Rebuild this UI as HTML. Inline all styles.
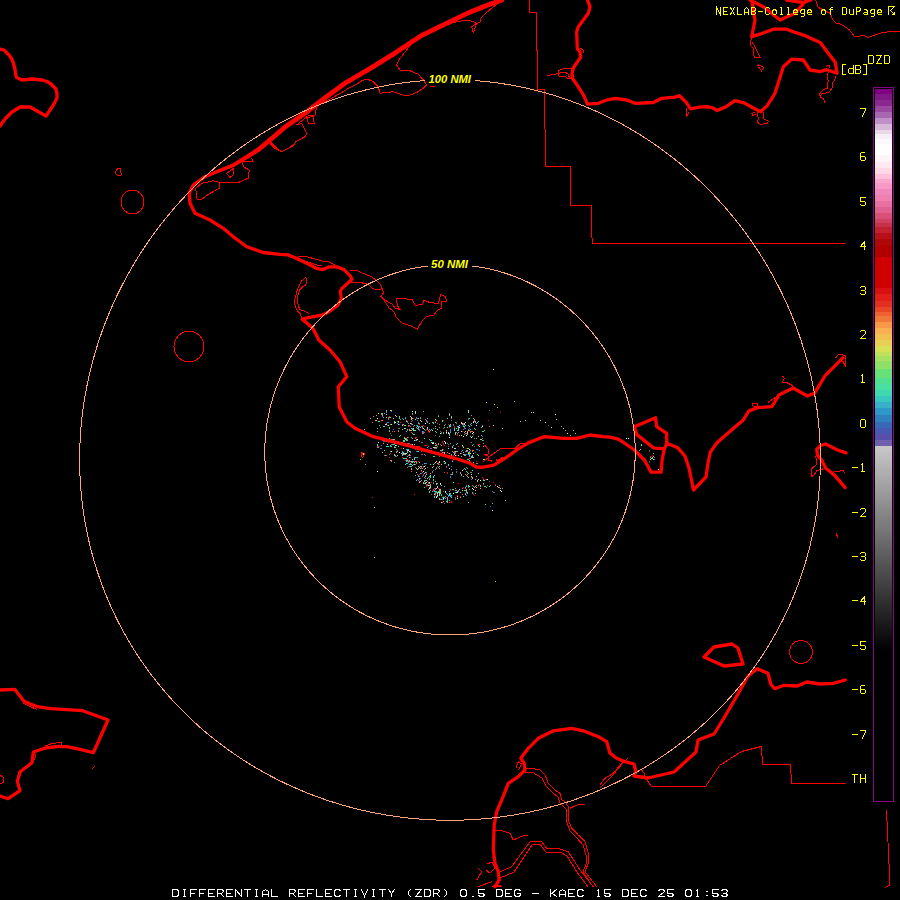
<!DOCTYPE html>
<html><head><meta charset="utf-8"><style>
html,body{margin:0;padding:0;background:#000;width:900px;height:900px;overflow:hidden}
svg{display:block}
</style></head><body>
<svg width="900" height="900" viewBox="0 0 900 900">
<rect width="900" height="900" fill="#000"/>
<g shape-rendering="crispEdges"><rect x="378" y="413" width="1" height="1" fill="#c0e040"/><rect x="382" y="413" width="1" height="1" fill="#40e080"/><rect x="381" y="413" width="1" height="1" fill="#40e080"/><rect x="384" y="413" width="1" height="1" fill="#30c0d0"/><rect x="381" y="414" width="1" height="1" fill="#ff6020"/><rect x="386" y="414" width="1" height="1" fill="#d0d0d0"/><rect x="376" y="415" width="1" height="1" fill="#a0a0a0"/><rect x="373" y="416" width="1" height="1" fill="#a0a0a0"/><rect x="396" y="416" width="1" height="1" fill="#c0e040"/><rect x="395" y="415" width="1" height="1" fill="#d0d0d0"/><rect x="410" y="416" width="1" height="1" fill="#d0d0d0"/><rect x="383" y="417" width="1" height="1" fill="#a0a0a0"/><rect x="386" y="417" width="1" height="1" fill="#80e060"/><rect x="390" y="417" width="1" height="1" fill="#40e080"/><rect x="420" y="417" width="1" height="1" fill="#80e060"/><rect x="377" y="418" width="1" height="1" fill="#ffffff"/><rect x="412" y="418" width="1" height="1" fill="#a0a0a0"/><rect x="413" y="418" width="1" height="1" fill="#ff0000"/><rect x="416" y="418" width="1" height="1" fill="#707070"/><rect x="417" y="418" width="1" height="1" fill="#3080e0"/><rect x="416" y="417" width="1" height="1" fill="#3080e0"/><rect x="418" y="418" width="1" height="1" fill="#80e060"/><rect x="427" y="418" width="1" height="1" fill="#30c0d0"/><rect x="400" y="419" width="1" height="1" fill="#30c0d0"/><rect x="403" y="419" width="1" height="1" fill="#ffa040"/><rect x="402" y="418" width="1" height="1" fill="#707070"/><rect x="415" y="419" width="1" height="1" fill="#d0d0d0"/><rect x="435" y="419" width="1" height="1" fill="#c0e040"/><rect x="376" y="420" width="1" height="1" fill="#ffa040"/><rect x="375" y="420" width="1" height="1" fill="#ffa040"/><rect x="382" y="420" width="1" height="1" fill="#ff6020"/><rect x="381" y="420" width="1" height="1" fill="#ff6020"/><rect x="412" y="420" width="1" height="1" fill="#3080e0"/><rect x="417" y="420" width="1" height="1" fill="#707070"/><rect x="426" y="420" width="1" height="1" fill="#a0a0a0"/><rect x="425" y="419" width="1" height="1" fill="#a0a0a0"/><rect x="436" y="420" width="1" height="1" fill="#c0e040"/><rect x="443" y="420" width="1" height="1" fill="#ff0000"/><rect x="451" y="420" width="1" height="1" fill="#6060c0"/><rect x="378" y="421" width="1" height="1" fill="#20e0e0"/><rect x="379" y="421" width="1" height="1" fill="#20e0e0"/><rect x="394" y="421" width="1" height="1" fill="#80e060"/><rect x="397" y="421" width="1" height="1" fill="#707070"/><rect x="398" y="421" width="1" height="1" fill="#d0d0d0"/><rect x="406" y="421" width="1" height="1" fill="#80e060"/><rect x="407" y="421" width="1" height="1" fill="#e04080"/><rect x="406" y="420" width="1" height="1" fill="#e04080"/><rect x="411" y="421" width="1" height="1" fill="#e04080"/><rect x="421" y="421" width="1" height="1" fill="#d0d0d0"/><rect x="420" y="420" width="1" height="1" fill="#d0d0d0"/><rect x="426" y="421" width="1" height="1" fill="#b040c0"/><rect x="427" y="421" width="1" height="1" fill="#6060c0"/><rect x="442" y="421" width="1" height="1" fill="#40e080"/><rect x="442" y="420" width="1" height="1" fill="#40e080"/><rect x="473" y="421" width="1" height="1" fill="#a0a0a0"/><rect x="474" y="420" width="1" height="1" fill="#a0a0a0"/><rect x="474" y="419" width="1" height="1" fill="#a0a0a0"/><rect x="475" y="421" width="1" height="1" fill="#a0a0a0"/><rect x="372" y="422" width="1" height="1" fill="#707070"/><rect x="388" y="422" width="1" height="1" fill="#3080e0"/><rect x="387" y="422" width="1" height="1" fill="#3080e0"/><rect x="394" y="422" width="1" height="1" fill="#d0d0d0"/><rect x="395" y="422" width="1" height="1" fill="#ffffff"/><rect x="398" y="422" width="1" height="1" fill="#20e0e0"/><rect x="400" y="422" width="1" height="1" fill="#ff0000"/><rect x="427" y="422" width="1" height="1" fill="#40e080"/><rect x="432" y="422" width="1" height="1" fill="#40e080"/><rect x="433" y="422" width="1" height="1" fill="#a0a0a0"/><rect x="435" y="422" width="1" height="1" fill="#80e060"/><rect x="435" y="421" width="1" height="1" fill="#ff0000"/><rect x="473" y="422" width="1" height="1" fill="#ffffff"/><rect x="474" y="421" width="1" height="1" fill="#ff6020"/><rect x="475" y="422" width="1" height="1" fill="#30c0d0"/><rect x="477" y="422" width="1" height="1" fill="#a0a0a0"/><rect x="478" y="421" width="1" height="1" fill="#a0a0a0"/><rect x="386" y="423" width="1" height="1" fill="#e04080"/><rect x="394" y="423" width="1" height="1" fill="#30c0d0"/><rect x="408" y="423" width="1" height="1" fill="#ff6020"/><rect x="407" y="422" width="1" height="1" fill="#3080e0"/><rect x="410" y="423" width="1" height="1" fill="#d0d0d0"/><rect x="411" y="423" width="1" height="1" fill="#30c0d0"/><rect x="419" y="423" width="1" height="1" fill="#3080e0"/><rect x="418" y="422" width="1" height="1" fill="#3080e0"/><rect x="425" y="423" width="1" height="1" fill="#ffffff"/><rect x="429" y="423" width="1" height="1" fill="#20e0e0"/><rect x="433" y="423" width="1" height="1" fill="#20e0e0"/><rect x="437" y="423" width="1" height="1" fill="#b040c0"/><rect x="456" y="423" width="1" height="1" fill="#707070"/><rect x="456" y="422" width="1" height="1" fill="#ff0000"/><rect x="461" y="423" width="1" height="1" fill="#d0d0d0"/><rect x="461" y="422" width="1" height="1" fill="#d0d0d0"/><rect x="463" y="423" width="1" height="1" fill="#e04080"/><rect x="471" y="423" width="1" height="1" fill="#20e0e0"/><rect x="476" y="423" width="1" height="1" fill="#20e0e0"/><rect x="477" y="422" width="1" height="1" fill="#a0a0a0"/><rect x="477" y="422" width="1" height="1" fill="#20e0e0"/><rect x="385" y="424" width="1" height="1" fill="#d0d0d0"/><rect x="391" y="424" width="1" height="1" fill="#c0e040"/><rect x="390" y="424" width="1" height="1" fill="#40e080"/><rect x="399" y="424" width="1" height="1" fill="#3080e0"/><rect x="398" y="424" width="1" height="1" fill="#d0d0d0"/><rect x="397" y="423" width="1" height="1" fill="#3080e0"/><rect x="403" y="424" width="1" height="1" fill="#a0a0a0"/><rect x="402" y="424" width="1" height="1" fill="#e04080"/><rect x="411" y="424" width="1" height="1" fill="#707070"/><rect x="412" y="424" width="1" height="1" fill="#20e0e0"/><rect x="419" y="424" width="1" height="1" fill="#ff0000"/><rect x="418" y="423" width="1" height="1" fill="#80e060"/><rect x="439" y="424" width="1" height="1" fill="#ff6020"/><rect x="445" y="424" width="1" height="1" fill="#707070"/><rect x="448" y="424" width="1" height="1" fill="#ff0000"/><rect x="453" y="424" width="1" height="1" fill="#e04080"/><rect x="462" y="424" width="1" height="1" fill="#ffa040"/><rect x="462" y="423" width="1" height="1" fill="#ffa040"/><rect x="464" y="424" width="1" height="1" fill="#d0d0d0"/><rect x="464" y="423" width="1" height="1" fill="#d0d0d0"/><rect x="465" y="422" width="1" height="1" fill="#d0d0d0"/><rect x="470" y="424" width="1" height="1" fill="#a0a0a0"/><rect x="379" y="425" width="1" height="1" fill="#a0a0a0"/><rect x="388" y="425" width="1" height="1" fill="#d0d0d0"/><rect x="387" y="425" width="1" height="1" fill="#707070"/><rect x="386" y="424" width="1" height="1" fill="#d0d0d0"/><rect x="402" y="425" width="1" height="1" fill="#c0e040"/><rect x="405" y="425" width="1" height="1" fill="#80e060"/><rect x="404" y="425" width="1" height="1" fill="#80e060"/><rect x="403" y="424" width="1" height="1" fill="#a0a0a0"/><rect x="414" y="425" width="1" height="1" fill="#30c0d0"/><rect x="444" y="425" width="1" height="1" fill="#80e060"/><rect x="449" y="425" width="1" height="1" fill="#40e080"/><rect x="453" y="425" width="1" height="1" fill="#6060c0"/><rect x="459" y="425" width="1" height="1" fill="#20e0e0"/><rect x="463" y="425" width="1" height="1" fill="#3080e0"/><rect x="463" y="424" width="1" height="1" fill="#3080e0"/><rect x="468" y="425" width="1" height="1" fill="#20e0e0"/><rect x="471" y="425" width="1" height="1" fill="#30c0d0"/><rect x="476" y="425" width="1" height="1" fill="#d0d0d0"/><rect x="482" y="425" width="1" height="1" fill="#b040c0"/><rect x="383" y="426" width="1" height="1" fill="#20e0e0"/><rect x="384" y="426" width="1" height="1" fill="#20e0e0"/><rect x="408" y="426" width="1" height="1" fill="#ff0000"/><rect x="410" y="426" width="1" height="1" fill="#707070"/><rect x="409" y="425" width="1" height="1" fill="#707070"/><rect x="408" y="425" width="1" height="1" fill="#ff6020"/><rect x="413" y="426" width="1" height="1" fill="#e04080"/><rect x="417" y="426" width="1" height="1" fill="#20e0e0"/><rect x="418" y="426" width="1" height="1" fill="#3080e0"/><rect x="417" y="425" width="1" height="1" fill="#40e080"/><rect x="416" y="425" width="1" height="1" fill="#3080e0"/><rect x="421" y="426" width="1" height="1" fill="#707070"/><rect x="422" y="426" width="1" height="1" fill="#20e0e0"/><rect x="424" y="426" width="1" height="1" fill="#ff0000"/><rect x="423" y="425" width="1" height="1" fill="#ff0000"/><rect x="423" y="425" width="1" height="1" fill="#ff0000"/><rect x="435" y="426" width="1" height="1" fill="#a0a0a0"/><rect x="449" y="426" width="1" height="1" fill="#20e0e0"/><rect x="450" y="426" width="1" height="1" fill="#20e0e0"/><rect x="450" y="425" width="1" height="1" fill="#20e0e0"/><rect x="450" y="424" width="1" height="1" fill="#20e0e0"/><rect x="457" y="426" width="1" height="1" fill="#20e0e0"/><rect x="463" y="426" width="1" height="1" fill="#20e0e0"/><rect x="464" y="426" width="1" height="1" fill="#20e0e0"/><rect x="465" y="425" width="1" height="1" fill="#20e0e0"/><rect x="469" y="426" width="1" height="1" fill="#20e0e0"/><rect x="380" y="427" width="1" height="1" fill="#707070"/><rect x="389" y="427" width="1" height="1" fill="#40e080"/><rect x="420" y="427" width="1" height="1" fill="#a0a0a0"/><rect x="419" y="426" width="1" height="1" fill="#a0a0a0"/><rect x="422" y="427" width="1" height="1" fill="#30c0d0"/><rect x="427" y="427" width="1" height="1" fill="#d0d0d0"/><rect x="444" y="427" width="1" height="1" fill="#20e0e0"/><rect x="447" y="427" width="1" height="1" fill="#80e060"/><rect x="449" y="427" width="1" height="1" fill="#ff0000"/><rect x="454" y="427" width="1" height="1" fill="#ff0000"/><rect x="454" y="426" width="1" height="1" fill="#ff0000"/><rect x="458" y="427" width="1" height="1" fill="#20e0e0"/><rect x="458" y="426" width="1" height="1" fill="#20e0e0"/><rect x="481" y="427" width="1" height="1" fill="#40e080"/><rect x="482" y="426" width="1" height="1" fill="#ffffff"/><rect x="377" y="428" width="1" height="1" fill="#a0a0a0"/><rect x="389" y="428" width="1" height="1" fill="#40e080"/><rect x="399" y="428" width="1" height="1" fill="#707070"/><rect x="398" y="428" width="1" height="1" fill="#707070"/><rect x="404" y="428" width="1" height="1" fill="#d0d0d0"/><rect x="405" y="428" width="1" height="1" fill="#40e080"/><rect x="413" y="428" width="1" height="1" fill="#c0e040"/><rect x="417" y="428" width="1" height="1" fill="#40e080"/><rect x="416" y="427" width="1" height="1" fill="#40e080"/><rect x="427" y="428" width="1" height="1" fill="#20e0e0"/><rect x="433" y="428" width="1" height="1" fill="#707070"/><rect x="435" y="428" width="1" height="1" fill="#40e080"/><rect x="443" y="428" width="1" height="1" fill="#b040c0"/><rect x="456" y="428" width="1" height="1" fill="#80e060"/><rect x="465" y="428" width="1" height="1" fill="#3080e0"/><rect x="474" y="428" width="1" height="1" fill="#80e060"/><rect x="393" y="429" width="1" height="1" fill="#3080e0"/><rect x="402" y="429" width="1" height="1" fill="#40e080"/><rect x="413" y="429" width="1" height="1" fill="#a0a0a0"/><rect x="412" y="428" width="1" height="1" fill="#3080e0"/><rect x="411" y="428" width="1" height="1" fill="#a0a0a0"/><rect x="419" y="429" width="1" height="1" fill="#b040c0"/><rect x="418" y="428" width="1" height="1" fill="#3080e0"/><rect x="424" y="429" width="1" height="1" fill="#20e0e0"/><rect x="423" y="428" width="1" height="1" fill="#ffffff"/><rect x="422" y="428" width="1" height="1" fill="#ff0000"/><rect x="426" y="429" width="1" height="1" fill="#ff0000"/><rect x="427" y="429" width="1" height="1" fill="#a0a0a0"/><rect x="437" y="429" width="1" height="1" fill="#80e060"/><rect x="458" y="429" width="1" height="1" fill="#20e0e0"/><rect x="458" y="428" width="1" height="1" fill="#20e0e0"/><rect x="459" y="427" width="1" height="1" fill="#ffffff"/><rect x="463" y="429" width="1" height="1" fill="#6060c0"/><rect x="464" y="428" width="1" height="1" fill="#6060c0"/><rect x="464" y="427" width="1" height="1" fill="#6060c0"/><rect x="468" y="429" width="1" height="1" fill="#6060c0"/><rect x="469" y="428" width="1" height="1" fill="#6060c0"/><rect x="475" y="429" width="1" height="1" fill="#80e060"/><rect x="389" y="430" width="1" height="1" fill="#30c0d0"/><rect x="398" y="430" width="1" height="1" fill="#707070"/><rect x="407" y="430" width="1" height="1" fill="#3080e0"/><rect x="409" y="430" width="1" height="1" fill="#20e0e0"/><rect x="411" y="430" width="1" height="1" fill="#ffa040"/><rect x="410" y="430" width="1" height="1" fill="#ffa040"/><rect x="409" y="429" width="1" height="1" fill="#ffa040"/><rect x="414" y="430" width="1" height="1" fill="#40e080"/><rect x="413" y="430" width="1" height="1" fill="#d0d0d0"/><rect x="412" y="429" width="1" height="1" fill="#40e080"/><rect x="415" y="430" width="1" height="1" fill="#d0d0d0"/><rect x="419" y="430" width="1" height="1" fill="#3080e0"/><rect x="418" y="429" width="1" height="1" fill="#40e080"/><rect x="425" y="430" width="1" height="1" fill="#707070"/><rect x="430" y="430" width="1" height="1" fill="#a0a0a0"/><rect x="429" y="429" width="1" height="1" fill="#ff0000"/><rect x="429" y="429" width="1" height="1" fill="#a0a0a0"/><rect x="432" y="430" width="1" height="1" fill="#d0d0d0"/><rect x="431" y="429" width="1" height="1" fill="#20e0e0"/><rect x="450" y="430" width="1" height="1" fill="#3080e0"/><rect x="450" y="429" width="1" height="1" fill="#3080e0"/><rect x="454" y="430" width="1" height="1" fill="#20e0e0"/><rect x="454" y="429" width="1" height="1" fill="#20e0e0"/><rect x="454" y="428" width="1" height="1" fill="#20e0e0"/><rect x="457" y="430" width="1" height="1" fill="#20e0e0"/><rect x="458" y="430" width="1" height="1" fill="#80e060"/><rect x="469" y="430" width="1" height="1" fill="#a0a0a0"/><rect x="470" y="429" width="1" height="1" fill="#a0a0a0"/><rect x="470" y="429" width="1" height="1" fill="#20e0e0"/><rect x="389" y="431" width="1" height="1" fill="#80e060"/><rect x="392" y="431" width="1" height="1" fill="#e04080"/><rect x="394" y="431" width="1" height="1" fill="#ff6020"/><rect x="398" y="431" width="1" height="1" fill="#ffa040"/><rect x="406" y="431" width="1" height="1" fill="#a0a0a0"/><rect x="422" y="431" width="1" height="1" fill="#30c0d0"/><rect x="429" y="431" width="1" height="1" fill="#ff6020"/><rect x="428" y="430" width="1" height="1" fill="#ff6020"/><rect x="450" y="431" width="1" height="1" fill="#3080e0"/><rect x="461" y="431" width="1" height="1" fill="#ffffff"/><rect x="462" y="431" width="1" height="1" fill="#ff0000"/><rect x="465" y="431" width="1" height="1" fill="#c0e040"/><rect x="467" y="431" width="1" height="1" fill="#ffa040"/><rect x="468" y="430" width="1" height="1" fill="#ffa040"/><rect x="470" y="431" width="1" height="1" fill="#ff6020"/><rect x="482" y="431" width="1" height="1" fill="#40e080"/><rect x="483" y="431" width="1" height="1" fill="#40e080"/><rect x="484" y="430" width="1" height="1" fill="#40e080"/><rect x="411" y="432" width="1" height="1" fill="#e04080"/><rect x="423" y="432" width="1" height="1" fill="#e04080"/><rect x="424" y="432" width="1" height="1" fill="#6060c0"/><rect x="423" y="431" width="1" height="1" fill="#6060c0"/><rect x="429" y="432" width="1" height="1" fill="#ff0000"/><rect x="428" y="431" width="1" height="1" fill="#ff0000"/><rect x="436" y="432" width="1" height="1" fill="#40e080"/><rect x="435" y="431" width="1" height="1" fill="#40e080"/><rect x="443" y="432" width="1" height="1" fill="#30c0d0"/><rect x="446" y="432" width="1" height="1" fill="#ffffff"/><rect x="446" y="431" width="1" height="1" fill="#e04080"/><rect x="446" y="430" width="1" height="1" fill="#c0e040"/><rect x="450" y="432" width="1" height="1" fill="#30c0d0"/><rect x="455" y="432" width="1" height="1" fill="#40e080"/><rect x="456" y="432" width="1" height="1" fill="#a0a0a0"/><rect x="458" y="432" width="1" height="1" fill="#a0a0a0"/><rect x="464" y="432" width="1" height="1" fill="#a0a0a0"/><rect x="470" y="432" width="1" height="1" fill="#ff6020"/><rect x="471" y="431" width="1" height="1" fill="#ff6020"/><rect x="472" y="431" width="1" height="1" fill="#ff6020"/><rect x="422" y="433" width="1" height="1" fill="#40e080"/><rect x="423" y="433" width="1" height="1" fill="#e04080"/><rect x="422" y="432" width="1" height="1" fill="#e04080"/><rect x="440" y="433" width="1" height="1" fill="#ffffff"/><rect x="441" y="433" width="1" height="1" fill="#707070"/><rect x="441" y="432" width="1" height="1" fill="#707070"/><rect x="440" y="431" width="1" height="1" fill="#707070"/><rect x="443" y="433" width="1" height="1" fill="#40e080"/><rect x="448" y="433" width="1" height="1" fill="#d0d0d0"/><rect x="448" y="432" width="1" height="1" fill="#d0d0d0"/><rect x="465" y="433" width="1" height="1" fill="#ff6020"/><rect x="466" y="433" width="1" height="1" fill="#707070"/><rect x="467" y="432" width="1" height="1" fill="#d0d0d0"/><rect x="467" y="433" width="1" height="1" fill="#d0d0d0"/><rect x="472" y="433" width="1" height="1" fill="#ffffff"/><rect x="473" y="432" width="1" height="1" fill="#ffffff"/><rect x="414" y="434" width="1" height="1" fill="#40e080"/><rect x="413" y="434" width="1" height="1" fill="#40e080"/><rect x="412" y="433" width="1" height="1" fill="#30c0d0"/><rect x="455" y="434" width="1" height="1" fill="#40e080"/><rect x="455" y="433" width="1" height="1" fill="#80e060"/><rect x="456" y="432" width="1" height="1" fill="#e04080"/><rect x="457" y="434" width="1" height="1" fill="#ff0000"/><rect x="457" y="433" width="1" height="1" fill="#3080e0"/><rect x="464" y="434" width="1" height="1" fill="#ff6020"/><rect x="465" y="433" width="1" height="1" fill="#ff6020"/><rect x="473" y="434" width="1" height="1" fill="#707070"/><rect x="391" y="435" width="1" height="1" fill="#3080e0"/><rect x="400" y="435" width="1" height="1" fill="#20e0e0"/><rect x="435" y="435" width="1" height="1" fill="#707070"/><rect x="449" y="435" width="1" height="1" fill="#a0a0a0"/><rect x="449" y="434" width="1" height="1" fill="#30c0d0"/><rect x="449" y="433" width="1" height="1" fill="#a0a0a0"/><rect x="457" y="435" width="1" height="1" fill="#ff0000"/><rect x="457" y="434" width="1" height="1" fill="#ff0000"/><rect x="459" y="435" width="1" height="1" fill="#a0a0a0"/><rect x="461" y="435" width="1" height="1" fill="#c0e040"/><rect x="466" y="435" width="1" height="1" fill="#ffffff"/><rect x="467" y="434" width="1" height="1" fill="#40e080"/><rect x="399" y="436" width="1" height="1" fill="#20e0e0"/><rect x="463" y="436" width="1" height="1" fill="#ffffff"/><rect x="470" y="436" width="1" height="1" fill="#20e0e0"/><rect x="478" y="436" width="1" height="1" fill="#ffa040"/><rect x="482" y="436" width="1" height="1" fill="#3080e0"/><rect x="408" y="437" width="1" height="1" fill="#ff0000"/><rect x="407" y="437" width="1" height="1" fill="#40e080"/><rect x="411" y="437" width="1" height="1" fill="#20e0e0"/><rect x="416" y="437" width="1" height="1" fill="#ff0000"/><rect x="415" y="437" width="1" height="1" fill="#ff0000"/><rect x="449" y="437" width="1" height="1" fill="#ffffff"/><rect x="471" y="437" width="1" height="1" fill="#ffffff"/><rect x="472" y="436" width="1" height="1" fill="#80e060"/><rect x="386" y="438" width="1" height="1" fill="#b040c0"/><rect x="385" y="438" width="1" height="1" fill="#b040c0"/><rect x="389" y="438" width="1" height="1" fill="#40e080"/><rect x="404" y="438" width="1" height="1" fill="#d0d0d0"/><rect x="406" y="438" width="1" height="1" fill="#ff6020"/><rect x="405" y="438" width="1" height="1" fill="#40e080"/><rect x="404" y="437" width="1" height="1" fill="#ff6020"/><rect x="412" y="438" width="1" height="1" fill="#a0a0a0"/><rect x="415" y="438" width="1" height="1" fill="#707070"/><rect x="424" y="438" width="1" height="1" fill="#40e080"/><rect x="474" y="438" width="1" height="1" fill="#30c0d0"/><rect x="476" y="438" width="1" height="1" fill="#a0a0a0"/><rect x="381" y="439" width="1" height="1" fill="#3080e0"/><rect x="380" y="439" width="1" height="1" fill="#3080e0"/><rect x="388" y="439" width="1" height="1" fill="#3080e0"/><rect x="387" y="439" width="1" height="1" fill="#3080e0"/><rect x="389" y="439" width="1" height="1" fill="#a0a0a0"/><rect x="391" y="439" width="1" height="1" fill="#a0a0a0"/><rect x="394" y="439" width="1" height="1" fill="#a0a0a0"/><rect x="393" y="439" width="1" height="1" fill="#a0a0a0"/><rect x="392" y="439" width="1" height="1" fill="#a0a0a0"/><rect x="406" y="439" width="1" height="1" fill="#80e060"/><rect x="405" y="439" width="1" height="1" fill="#80e060"/><rect x="407" y="439" width="1" height="1" fill="#6060c0"/><rect x="417" y="439" width="1" height="1" fill="#ffffff"/><rect x="416" y="439" width="1" height="1" fill="#ffa040"/><rect x="415" y="438" width="1" height="1" fill="#e04080"/><rect x="480" y="439" width="1" height="1" fill="#80e060"/><rect x="481" y="439" width="1" height="1" fill="#80e060"/><rect x="482" y="438" width="1" height="1" fill="#707070"/><rect x="383" y="440" width="1" height="1" fill="#a0a0a0"/><rect x="382" y="440" width="1" height="1" fill="#a0a0a0"/><rect x="387" y="440" width="1" height="1" fill="#ff6020"/><rect x="386" y="440" width="1" height="1" fill="#ff6020"/><rect x="404" y="440" width="1" height="1" fill="#20e0e0"/><rect x="403" y="440" width="1" height="1" fill="#40e080"/><rect x="407" y="440" width="1" height="1" fill="#a0a0a0"/><rect x="406" y="440" width="1" height="1" fill="#a0a0a0"/><rect x="415" y="440" width="1" height="1" fill="#d0d0d0"/><rect x="414" y="440" width="1" height="1" fill="#d0d0d0"/><rect x="416" y="440" width="1" height="1" fill="#40e080"/><rect x="415" y="440" width="1" height="1" fill="#3080e0"/><rect x="431" y="440" width="1" height="1" fill="#30c0d0"/><rect x="430" y="440" width="1" height="1" fill="#40e080"/><rect x="429" y="439" width="1" height="1" fill="#30c0d0"/><rect x="482" y="440" width="1" height="1" fill="#20e0e0"/><rect x="483" y="440" width="1" height="1" fill="#707070"/><rect x="383" y="441" width="1" height="1" fill="#6060c0"/><rect x="384" y="441" width="1" height="1" fill="#707070"/><rect x="386" y="441" width="1" height="1" fill="#ff0000"/><rect x="385" y="441" width="1" height="1" fill="#ff0000"/><rect x="388" y="441" width="1" height="1" fill="#e04080"/><rect x="387" y="441" width="1" height="1" fill="#e04080"/><rect x="386" y="441" width="1" height="1" fill="#a0a0a0"/><rect x="389" y="441" width="1" height="1" fill="#ff0000"/><rect x="393" y="441" width="1" height="1" fill="#80e060"/><rect x="398" y="441" width="1" height="1" fill="#e04080"/><rect x="404" y="441" width="1" height="1" fill="#40e080"/><rect x="403" y="441" width="1" height="1" fill="#40e080"/><rect x="419" y="441" width="1" height="1" fill="#707070"/><rect x="378" y="442" width="1" height="1" fill="#d0d0d0"/><rect x="388" y="442" width="1" height="1" fill="#ff0000"/><rect x="391" y="442" width="1" height="1" fill="#a0a0a0"/><rect x="393" y="442" width="1" height="1" fill="#30c0d0"/><rect x="395" y="442" width="1" height="1" fill="#20e0e0"/><rect x="401" y="442" width="1" height="1" fill="#ffa040"/><rect x="400" y="442" width="1" height="1" fill="#ffa040"/><rect x="402" y="442" width="1" height="1" fill="#a0a0a0"/><rect x="422" y="442" width="1" height="1" fill="#707070"/><rect x="421" y="442" width="1" height="1" fill="#707070"/><rect x="433" y="442" width="1" height="1" fill="#40e080"/><rect x="432" y="442" width="1" height="1" fill="#a0a0a0"/><rect x="471" y="442" width="1" height="1" fill="#b040c0"/><rect x="394" y="443" width="1" height="1" fill="#20e0e0"/><rect x="395" y="443" width="1" height="1" fill="#a0a0a0"/><rect x="398" y="443" width="1" height="1" fill="#20e0e0"/><rect x="405" y="443" width="1" height="1" fill="#a0a0a0"/><rect x="409" y="443" width="1" height="1" fill="#707070"/><rect x="408" y="443" width="1" height="1" fill="#ff6020"/><rect x="407" y="443" width="1" height="1" fill="#707070"/><rect x="433" y="443" width="1" height="1" fill="#ffffff"/><rect x="432" y="443" width="1" height="1" fill="#ffffff"/><rect x="431" y="442" width="1" height="1" fill="#80e060"/><rect x="435" y="443" width="1" height="1" fill="#d0d0d0"/><rect x="438" y="443" width="1" height="1" fill="#a0a0a0"/><rect x="443" y="443" width="1" height="1" fill="#ff0000"/><rect x="442" y="442" width="1" height="1" fill="#ff0000"/><rect x="442" y="441" width="1" height="1" fill="#ff0000"/><rect x="445" y="443" width="1" height="1" fill="#ffffff"/><rect x="445" y="442" width="1" height="1" fill="#ffffff"/><rect x="444" y="441" width="1" height="1" fill="#ffffff"/><rect x="447" y="443" width="1" height="1" fill="#3080e0"/><rect x="450" y="443" width="1" height="1" fill="#a0a0a0"/><rect x="483" y="443" width="1" height="1" fill="#ff6020"/><rect x="377" y="444" width="1" height="1" fill="#30c0d0"/><rect x="387" y="444" width="1" height="1" fill="#d0d0d0"/><rect x="391" y="444" width="1" height="1" fill="#ff0000"/><rect x="392" y="444" width="1" height="1" fill="#e04080"/><rect x="393" y="444" width="1" height="1" fill="#30c0d0"/><rect x="392" y="444" width="1" height="1" fill="#30c0d0"/><rect x="391" y="444" width="1" height="1" fill="#e04080"/><rect x="394" y="444" width="1" height="1" fill="#30c0d0"/><rect x="393" y="444" width="1" height="1" fill="#a0a0a0"/><rect x="392" y="444" width="1" height="1" fill="#30c0d0"/><rect x="411" y="444" width="1" height="1" fill="#a0a0a0"/><rect x="410" y="444" width="1" height="1" fill="#3080e0"/><rect x="412" y="444" width="1" height="1" fill="#d0d0d0"/><rect x="411" y="444" width="1" height="1" fill="#6060c0"/><rect x="414" y="444" width="1" height="1" fill="#c0e040"/><rect x="436" y="444" width="1" height="1" fill="#ff6020"/><rect x="438" y="444" width="1" height="1" fill="#a0a0a0"/><rect x="448" y="444" width="1" height="1" fill="#6060c0"/><rect x="456" y="444" width="1" height="1" fill="#20e0e0"/><rect x="457" y="443" width="1" height="1" fill="#20e0e0"/><rect x="473" y="444" width="1" height="1" fill="#3080e0"/><rect x="478" y="444" width="1" height="1" fill="#ff0000"/><rect x="479" y="444" width="1" height="1" fill="#e04080"/><rect x="377" y="445" width="1" height="1" fill="#80e060"/><rect x="381" y="445" width="1" height="1" fill="#3080e0"/><rect x="390" y="445" width="1" height="1" fill="#20e0e0"/><rect x="395" y="445" width="1" height="1" fill="#ffffff"/><rect x="396" y="445" width="1" height="1" fill="#80e060"/><rect x="403" y="445" width="1" height="1" fill="#ffffff"/><rect x="409" y="445" width="1" height="1" fill="#20e0e0"/><rect x="408" y="445" width="1" height="1" fill="#ff6020"/><rect x="407" y="445" width="1" height="1" fill="#80e060"/><rect x="412" y="445" width="1" height="1" fill="#707070"/><rect x="426" y="445" width="1" height="1" fill="#ff0000"/><rect x="425" y="445" width="1" height="1" fill="#ff0000"/><rect x="424" y="445" width="1" height="1" fill="#ff0000"/><rect x="436" y="445" width="1" height="1" fill="#40e080"/><rect x="435" y="445" width="1" height="1" fill="#40e080"/><rect x="441" y="445" width="1" height="1" fill="#ffa040"/><rect x="440" y="444" width="1" height="1" fill="#3080e0"/><rect x="444" y="445" width="1" height="1" fill="#ff0000"/><rect x="443" y="444" width="1" height="1" fill="#ff0000"/><rect x="462" y="445" width="1" height="1" fill="#c0e040"/><rect x="472" y="445" width="1" height="1" fill="#80e060"/><rect x="478" y="445" width="1" height="1" fill="#40e080"/><rect x="377" y="446" width="1" height="1" fill="#80e060"/><rect x="378" y="446" width="1" height="1" fill="#ff0000"/><rect x="377" y="446" width="1" height="1" fill="#3080e0"/><rect x="386" y="446" width="1" height="1" fill="#20e0e0"/><rect x="387" y="446" width="1" height="1" fill="#ffffff"/><rect x="386" y="446" width="1" height="1" fill="#20e0e0"/><rect x="388" y="446" width="1" height="1" fill="#20e0e0"/><rect x="387" y="446" width="1" height="1" fill="#20e0e0"/><rect x="391" y="446" width="1" height="1" fill="#40e080"/><rect x="390" y="446" width="1" height="1" fill="#40e080"/><rect x="398" y="446" width="1" height="1" fill="#40e080"/><rect x="407" y="446" width="1" height="1" fill="#ff0000"/><rect x="408" y="446" width="1" height="1" fill="#707070"/><rect x="417" y="446" width="1" height="1" fill="#707070"/><rect x="416" y="446" width="1" height="1" fill="#80e060"/><rect x="419" y="446" width="1" height="1" fill="#ff0000"/><rect x="418" y="446" width="1" height="1" fill="#ff0000"/><rect x="428" y="446" width="1" height="1" fill="#3080e0"/><rect x="437" y="446" width="1" height="1" fill="#ff6020"/><rect x="448" y="446" width="1" height="1" fill="#ff0000"/><rect x="452" y="446" width="1" height="1" fill="#30c0d0"/><rect x="453" y="445" width="1" height="1" fill="#30c0d0"/><rect x="458" y="446" width="1" height="1" fill="#ffa040"/><rect x="462" y="446" width="1" height="1" fill="#707070"/><rect x="463" y="446" width="1" height="1" fill="#707070"/><rect x="474" y="446" width="1" height="1" fill="#707070"/><rect x="479" y="446" width="1" height="1" fill="#40e080"/><rect x="483" y="446" width="1" height="1" fill="#a0a0a0"/><rect x="378" y="447" width="1" height="1" fill="#40e080"/><rect x="377" y="447" width="1" height="1" fill="#e04080"/><rect x="395" y="447" width="1" height="1" fill="#80e060"/><rect x="394" y="447" width="1" height="1" fill="#80e060"/><rect x="417" y="447" width="1" height="1" fill="#20e0e0"/><rect x="427" y="447" width="1" height="1" fill="#30c0d0"/><rect x="435" y="447" width="1" height="1" fill="#d0d0d0"/><rect x="434" y="447" width="1" height="1" fill="#d0d0d0"/><rect x="433" y="447" width="1" height="1" fill="#d0d0d0"/><rect x="436" y="447" width="1" height="1" fill="#40e080"/><rect x="435" y="447" width="1" height="1" fill="#80e060"/><rect x="463" y="447" width="1" height="1" fill="#80e060"/><rect x="381" y="448" width="1" height="1" fill="#3080e0"/><rect x="380" y="448" width="1" height="1" fill="#6060c0"/><rect x="401" y="448" width="1" height="1" fill="#ff0000"/><rect x="403" y="448" width="1" height="1" fill="#d0d0d0"/><rect x="431" y="448" width="1" height="1" fill="#b040c0"/><rect x="430" y="448" width="1" height="1" fill="#b040c0"/><rect x="434" y="448" width="1" height="1" fill="#707070"/><rect x="436" y="448" width="1" height="1" fill="#707070"/><rect x="435" y="448" width="1" height="1" fill="#707070"/><rect x="448" y="448" width="1" height="1" fill="#e04080"/><rect x="454" y="448" width="1" height="1" fill="#d0d0d0"/><rect x="455" y="448" width="1" height="1" fill="#d0d0d0"/><rect x="466" y="448" width="1" height="1" fill="#ff0000"/><rect x="467" y="448" width="1" height="1" fill="#ff0000"/><rect x="467" y="448" width="1" height="1" fill="#40e080"/><rect x="468" y="448" width="1" height="1" fill="#40e080"/><rect x="396" y="449" width="1" height="1" fill="#30c0d0"/><rect x="408" y="449" width="1" height="1" fill="#30c0d0"/><rect x="407" y="449" width="1" height="1" fill="#30c0d0"/><rect x="406" y="449" width="1" height="1" fill="#30c0d0"/><rect x="415" y="449" width="1" height="1" fill="#6060c0"/><rect x="417" y="449" width="1" height="1" fill="#ff6020"/><rect x="418" y="449" width="1" height="1" fill="#ff6020"/><rect x="417" y="449" width="1" height="1" fill="#ff6020"/><rect x="427" y="449" width="1" height="1" fill="#707070"/><rect x="443" y="449" width="1" height="1" fill="#ff0000"/><rect x="442" y="449" width="1" height="1" fill="#40e080"/><rect x="469" y="449" width="1" height="1" fill="#ffffff"/><rect x="476" y="449" width="1" height="1" fill="#3080e0"/><rect x="477" y="449" width="1" height="1" fill="#3080e0"/><rect x="384" y="450" width="1" height="1" fill="#40e080"/><rect x="397" y="450" width="1" height="1" fill="#e04080"/><rect x="408" y="450" width="1" height="1" fill="#d0d0d0"/><rect x="407" y="450" width="1" height="1" fill="#d0d0d0"/><rect x="431" y="450" width="1" height="1" fill="#ffa040"/><rect x="442" y="450" width="1" height="1" fill="#20e0e0"/><rect x="441" y="450" width="1" height="1" fill="#a0a0a0"/><rect x="440" y="450" width="1" height="1" fill="#a0a0a0"/><rect x="462" y="450" width="1" height="1" fill="#20e0e0"/><rect x="466" y="450" width="1" height="1" fill="#a0a0a0"/><rect x="467" y="450" width="1" height="1" fill="#a0a0a0"/><rect x="470" y="450" width="1" height="1" fill="#40e080"/><rect x="472" y="450" width="1" height="1" fill="#ff6020"/><rect x="473" y="450" width="1" height="1" fill="#ff6020"/><rect x="479" y="450" width="1" height="1" fill="#3080e0"/><rect x="391" y="451" width="1" height="1" fill="#ffffff"/><rect x="390" y="451" width="1" height="1" fill="#30c0d0"/><rect x="397" y="451" width="1" height="1" fill="#a0a0a0"/><rect x="396" y="451" width="1" height="1" fill="#3080e0"/><rect x="402" y="451" width="1" height="1" fill="#30c0d0"/><rect x="407" y="451" width="1" height="1" fill="#30c0d0"/><rect x="409" y="451" width="1" height="1" fill="#d0d0d0"/><rect x="410" y="451" width="1" height="1" fill="#30c0d0"/><rect x="418" y="451" width="1" height="1" fill="#30c0d0"/><rect x="417" y="451" width="1" height="1" fill="#30c0d0"/><rect x="416" y="451" width="1" height="1" fill="#3080e0"/><rect x="421" y="451" width="1" height="1" fill="#ff0000"/><rect x="430" y="451" width="1" height="1" fill="#80e060"/><rect x="441" y="451" width="1" height="1" fill="#ff0000"/><rect x="452" y="451" width="1" height="1" fill="#ff6020"/><rect x="454" y="451" width="1" height="1" fill="#ff6020"/><rect x="455" y="451" width="1" height="1" fill="#80e060"/><rect x="456" y="451" width="1" height="1" fill="#20e0e0"/><rect x="457" y="451" width="1" height="1" fill="#a0a0a0"/><rect x="461" y="451" width="1" height="1" fill="#3080e0"/><rect x="465" y="451" width="1" height="1" fill="#707070"/><rect x="466" y="451" width="1" height="1" fill="#a0a0a0"/><rect x="467" y="451" width="1" height="1" fill="#707070"/><rect x="469" y="451" width="1" height="1" fill="#3080e0"/><rect x="472" y="451" width="1" height="1" fill="#ff6020"/><rect x="382" y="452" width="1" height="1" fill="#80e060"/><rect x="396" y="452" width="1" height="1" fill="#ffa040"/><rect x="399" y="452" width="1" height="1" fill="#ffffff"/><rect x="403" y="452" width="1" height="1" fill="#30c0d0"/><rect x="402" y="452" width="1" height="1" fill="#30c0d0"/><rect x="407" y="452" width="1" height="1" fill="#40e080"/><rect x="410" y="452" width="1" height="1" fill="#30c0d0"/><rect x="430" y="452" width="1" height="1" fill="#ff0000"/><rect x="436" y="452" width="1" height="1" fill="#a0a0a0"/><rect x="438" y="452" width="1" height="1" fill="#c0e040"/><rect x="442" y="452" width="1" height="1" fill="#30c0d0"/><rect x="443" y="452" width="1" height="1" fill="#e04080"/><rect x="442" y="452" width="1" height="1" fill="#a0a0a0"/><rect x="441" y="453" width="1" height="1" fill="#e04080"/><rect x="444" y="452" width="1" height="1" fill="#ffa040"/><rect x="447" y="452" width="1" height="1" fill="#ff6020"/><rect x="453" y="452" width="1" height="1" fill="#30c0d0"/><rect x="454" y="452" width="1" height="1" fill="#a0a0a0"/><rect x="455" y="453" width="1" height="1" fill="#707070"/><rect x="454" y="452" width="1" height="1" fill="#e04080"/><rect x="455" y="452" width="1" height="1" fill="#e04080"/><rect x="463" y="452" width="1" height="1" fill="#20e0e0"/><rect x="468" y="452" width="1" height="1" fill="#40e080"/><rect x="469" y="452" width="1" height="1" fill="#40e080"/><rect x="475" y="452" width="1" height="1" fill="#3080e0"/><rect x="390" y="453" width="1" height="1" fill="#ff0000"/><rect x="401" y="453" width="1" height="1" fill="#a0a0a0"/><rect x="402" y="453" width="1" height="1" fill="#3080e0"/><rect x="403" y="453" width="1" height="1" fill="#c0e040"/><rect x="404" y="453" width="1" height="1" fill="#20e0e0"/><rect x="406" y="453" width="1" height="1" fill="#d0d0d0"/><rect x="405" y="453" width="1" height="1" fill="#d0d0d0"/><rect x="444" y="453" width="1" height="1" fill="#d0d0d0"/><rect x="448" y="453" width="1" height="1" fill="#ff0000"/><rect x="449" y="453" width="1" height="1" fill="#80e060"/><rect x="460" y="453" width="1" height="1" fill="#d0d0d0"/><rect x="461" y="453" width="1" height="1" fill="#e04080"/><rect x="468" y="453" width="1" height="1" fill="#c0e040"/><rect x="469" y="453" width="1" height="1" fill="#ff6020"/><rect x="470" y="453" width="1" height="1" fill="#c0e040"/><rect x="473" y="453" width="1" height="1" fill="#80e060"/><rect x="389" y="454" width="1" height="1" fill="#3080e0"/><rect x="394" y="454" width="1" height="1" fill="#a0a0a0"/><rect x="402" y="454" width="1" height="1" fill="#707070"/><rect x="404" y="454" width="1" height="1" fill="#a0a0a0"/><rect x="403" y="454" width="1" height="1" fill="#a0a0a0"/><rect x="402" y="454" width="1" height="1" fill="#a0a0a0"/><rect x="405" y="454" width="1" height="1" fill="#a0a0a0"/><rect x="409" y="454" width="1" height="1" fill="#80e060"/><rect x="422" y="454" width="1" height="1" fill="#6060c0"/><rect x="421" y="454" width="1" height="1" fill="#6060c0"/><rect x="424" y="454" width="1" height="1" fill="#ff6020"/><rect x="451" y="454" width="1" height="1" fill="#30c0d0"/><rect x="451" y="455" width="1" height="1" fill="#30c0d0"/><rect x="452" y="456" width="1" height="1" fill="#30c0d0"/><rect x="454" y="454" width="1" height="1" fill="#d0d0d0"/><rect x="455" y="455" width="1" height="1" fill="#d0d0d0"/><rect x="456" y="455" width="1" height="1" fill="#ff0000"/><rect x="463" y="454" width="1" height="1" fill="#a0a0a0"/><rect x="464" y="454" width="1" height="1" fill="#a0a0a0"/><rect x="465" y="455" width="1" height="1" fill="#a0a0a0"/><rect x="465" y="454" width="1" height="1" fill="#3080e0"/><rect x="466" y="454" width="1" height="1" fill="#3080e0"/><rect x="468" y="454" width="1" height="1" fill="#30c0d0"/><rect x="469" y="454" width="1" height="1" fill="#30c0d0"/><rect x="477" y="454" width="1" height="1" fill="#40e080"/><rect x="484" y="454" width="1" height="1" fill="#d0d0d0"/><rect x="386" y="455" width="1" height="1" fill="#e04080"/><rect x="385" y="455" width="1" height="1" fill="#40e080"/><rect x="384" y="455" width="1" height="1" fill="#e04080"/><rect x="395" y="455" width="1" height="1" fill="#20e0e0"/><rect x="394" y="455" width="1" height="1" fill="#ffa040"/><rect x="397" y="455" width="1" height="1" fill="#d0d0d0"/><rect x="402" y="455" width="1" height="1" fill="#20e0e0"/><rect x="408" y="455" width="1" height="1" fill="#e04080"/><rect x="409" y="455" width="1" height="1" fill="#ffa040"/><rect x="410" y="455" width="1" height="1" fill="#3080e0"/><rect x="425" y="455" width="1" height="1" fill="#6060c0"/><rect x="448" y="455" width="1" height="1" fill="#20e0e0"/><rect x="449" y="455" width="1" height="1" fill="#6060c0"/><rect x="451" y="455" width="1" height="1" fill="#40e080"/><rect x="451" y="456" width="1" height="1" fill="#80e060"/><rect x="452" y="457" width="1" height="1" fill="#40e080"/><rect x="453" y="455" width="1" height="1" fill="#ff0000"/><rect x="458" y="455" width="1" height="1" fill="#d0d0d0"/><rect x="464" y="455" width="1" height="1" fill="#40e080"/><rect x="469" y="455" width="1" height="1" fill="#20e0e0"/><rect x="472" y="455" width="1" height="1" fill="#40e080"/><rect x="478" y="455" width="1" height="1" fill="#80e060"/><rect x="396" y="456" width="1" height="1" fill="#707070"/><rect x="395" y="456" width="1" height="1" fill="#707070"/><rect x="407" y="456" width="1" height="1" fill="#20e0e0"/><rect x="434" y="456" width="1" height="1" fill="#40e080"/><rect x="433" y="456" width="1" height="1" fill="#40e080"/><rect x="439" y="456" width="1" height="1" fill="#707070"/><rect x="445" y="456" width="1" height="1" fill="#707070"/><rect x="461" y="456" width="1" height="1" fill="#30c0d0"/><rect x="469" y="456" width="1" height="1" fill="#e04080"/><rect x="471" y="456" width="1" height="1" fill="#20e0e0"/><rect x="472" y="456" width="1" height="1" fill="#20e0e0"/><rect x="473" y="457" width="1" height="1" fill="#ffa040"/><rect x="389" y="457" width="1" height="1" fill="#ff0000"/><rect x="402" y="457" width="1" height="1" fill="#ff0000"/><rect x="410" y="457" width="1" height="1" fill="#6060c0"/><rect x="409" y="457" width="1" height="1" fill="#c0e040"/><rect x="414" y="457" width="1" height="1" fill="#3080e0"/><rect x="416" y="457" width="1" height="1" fill="#707070"/><rect x="415" y="457" width="1" height="1" fill="#a0a0a0"/><rect x="417" y="457" width="1" height="1" fill="#20e0e0"/><rect x="471" y="457" width="1" height="1" fill="#20e0e0"/><rect x="472" y="457" width="1" height="1" fill="#20e0e0"/><rect x="405" y="458" width="1" height="1" fill="#30c0d0"/><rect x="404" y="458" width="1" height="1" fill="#30c0d0"/><rect x="403" y="458" width="1" height="1" fill="#80e060"/><rect x="414" y="458" width="1" height="1" fill="#40e080"/><rect x="469" y="458" width="1" height="1" fill="#e04080"/><rect x="470" y="458" width="1" height="1" fill="#e04080"/><rect x="407" y="459" width="1" height="1" fill="#ff0000"/><rect x="406" y="459" width="1" height="1" fill="#ff0000"/><rect x="412" y="459" width="1" height="1" fill="#d0d0d0"/><rect x="414" y="459" width="1" height="1" fill="#d0d0d0"/><rect x="453" y="459" width="1" height="1" fill="#20e0e0"/><rect x="467" y="459" width="1" height="1" fill="#40e080"/><rect x="468" y="459" width="1" height="1" fill="#40e080"/><rect x="469" y="460" width="1" height="1" fill="#40e080"/><rect x="483" y="459" width="1" height="1" fill="#80e060"/><rect x="484" y="459" width="1" height="1" fill="#80e060"/><rect x="391" y="460" width="1" height="1" fill="#a0a0a0"/><rect x="390" y="460" width="1" height="1" fill="#ff6020"/><rect x="407" y="460" width="1" height="1" fill="#20e0e0"/><rect x="406" y="460" width="1" height="1" fill="#20e0e0"/><rect x="405" y="460" width="1" height="1" fill="#ff0000"/><rect x="408" y="460" width="1" height="1" fill="#ff0000"/><rect x="409" y="460" width="1" height="1" fill="#a0a0a0"/><rect x="452" y="460" width="1" height="1" fill="#ff0000"/><rect x="452" y="461" width="1" height="1" fill="#20e0e0"/><rect x="459" y="460" width="1" height="1" fill="#a0a0a0"/><rect x="391" y="461" width="1" height="1" fill="#ff6020"/><rect x="407" y="461" width="1" height="1" fill="#40e080"/><rect x="406" y="461" width="1" height="1" fill="#40e080"/><rect x="408" y="461" width="1" height="1" fill="#20e0e0"/><rect x="407" y="461" width="1" height="1" fill="#6060c0"/><rect x="410" y="461" width="1" height="1" fill="#e04080"/><rect x="409" y="461" width="1" height="1" fill="#ff6020"/><rect x="408" y="462" width="1" height="1" fill="#e04080"/><rect x="411" y="461" width="1" height="1" fill="#d0d0d0"/><rect x="412" y="461" width="1" height="1" fill="#20e0e0"/><rect x="414" y="461" width="1" height="1" fill="#ff0000"/><rect x="413" y="461" width="1" height="1" fill="#20e0e0"/><rect x="412" y="462" width="1" height="1" fill="#3080e0"/><rect x="415" y="461" width="1" height="1" fill="#40e080"/><rect x="416" y="461" width="1" height="1" fill="#e04080"/><rect x="415" y="461" width="1" height="1" fill="#a0a0a0"/><rect x="414" y="462" width="1" height="1" fill="#c0e040"/><rect x="418" y="461" width="1" height="1" fill="#ff0000"/><rect x="436" y="461" width="1" height="1" fill="#d0d0d0"/><rect x="435" y="462" width="1" height="1" fill="#d0d0d0"/><rect x="439" y="461" width="1" height="1" fill="#c0e040"/><rect x="438" y="462" width="1" height="1" fill="#20e0e0"/><rect x="443" y="461" width="1" height="1" fill="#707070"/><rect x="476" y="461" width="1" height="1" fill="#ff0000"/><rect x="394" y="462" width="1" height="1" fill="#3080e0"/><rect x="411" y="462" width="1" height="1" fill="#707070"/><rect x="412" y="462" width="1" height="1" fill="#40e080"/><rect x="416" y="462" width="1" height="1" fill="#30c0d0"/><rect x="419" y="462" width="1" height="1" fill="#20e0e0"/><rect x="438" y="462" width="1" height="1" fill="#ff0000"/><rect x="437" y="463" width="1" height="1" fill="#707070"/><rect x="437" y="463" width="1" height="1" fill="#30c0d0"/><rect x="439" y="462" width="1" height="1" fill="#ffffff"/><rect x="438" y="463" width="1" height="1" fill="#ff6020"/><rect x="438" y="464" width="1" height="1" fill="#707070"/><rect x="445" y="462" width="1" height="1" fill="#40e080"/><rect x="445" y="463" width="1" height="1" fill="#40e080"/><rect x="407" y="463" width="1" height="1" fill="#20e0e0"/><rect x="406" y="463" width="1" height="1" fill="#20e0e0"/><rect x="405" y="464" width="1" height="1" fill="#20e0e0"/><rect x="410" y="463" width="1" height="1" fill="#707070"/><rect x="416" y="463" width="1" height="1" fill="#ff6020"/><rect x="424" y="463" width="1" height="1" fill="#30c0d0"/><rect x="426" y="463" width="1" height="1" fill="#3080e0"/><rect x="425" y="463" width="1" height="1" fill="#3080e0"/><rect x="434" y="463" width="1" height="1" fill="#a0a0a0"/><rect x="433" y="464" width="1" height="1" fill="#a0a0a0"/><rect x="444" y="463" width="1" height="1" fill="#30c0d0"/><rect x="476" y="463" width="1" height="1" fill="#ff6020"/><rect x="477" y="463" width="1" height="1" fill="#ff6020"/><rect x="410" y="464" width="1" height="1" fill="#20e0e0"/><rect x="409" y="464" width="1" height="1" fill="#20e0e0"/><rect x="411" y="464" width="1" height="1" fill="#20e0e0"/><rect x="414" y="464" width="1" height="1" fill="#d0d0d0"/><rect x="413" y="464" width="1" height="1" fill="#707070"/><rect x="415" y="464" width="1" height="1" fill="#707070"/><rect x="422" y="464" width="1" height="1" fill="#707070"/><rect x="430" y="464" width="1" height="1" fill="#20e0e0"/><rect x="433" y="464" width="1" height="1" fill="#40e080"/><rect x="439" y="464" width="1" height="1" fill="#ff0000"/><rect x="441" y="464" width="1" height="1" fill="#a0a0a0"/><rect x="448" y="464" width="1" height="1" fill="#20e0e0"/><rect x="448" y="465" width="1" height="1" fill="#20e0e0"/><rect x="412" y="465" width="1" height="1" fill="#20e0e0"/><rect x="425" y="465" width="1" height="1" fill="#707070"/><rect x="408" y="466" width="1" height="1" fill="#d0d0d0"/><rect x="409" y="466" width="1" height="1" fill="#707070"/><rect x="408" y="466" width="1" height="1" fill="#707070"/><rect x="407" y="467" width="1" height="1" fill="#707070"/><rect x="411" y="466" width="1" height="1" fill="#40e080"/><rect x="410" y="466" width="1" height="1" fill="#40e080"/><rect x="418" y="466" width="1" height="1" fill="#20e0e0"/><rect x="421" y="466" width="1" height="1" fill="#ffa040"/><rect x="420" y="466" width="1" height="1" fill="#ffa040"/><rect x="419" y="467" width="1" height="1" fill="#c0e040"/><rect x="423" y="466" width="1" height="1" fill="#3080e0"/><rect x="424" y="466" width="1" height="1" fill="#ffffff"/><rect x="433" y="466" width="1" height="1" fill="#a0a0a0"/><rect x="432" y="467" width="1" height="1" fill="#c0e040"/><rect x="437" y="466" width="1" height="1" fill="#6060c0"/><rect x="436" y="467" width="1" height="1" fill="#6060c0"/><rect x="436" y="468" width="1" height="1" fill="#40e080"/><rect x="439" y="466" width="1" height="1" fill="#80e060"/><rect x="438" y="467" width="1" height="1" fill="#ff6020"/><rect x="446" y="466" width="1" height="1" fill="#b040c0"/><rect x="446" y="467" width="1" height="1" fill="#b040c0"/><rect x="451" y="466" width="1" height="1" fill="#707070"/><rect x="415" y="467" width="1" height="1" fill="#707070"/><rect x="421" y="467" width="1" height="1" fill="#707070"/><rect x="420" y="468" width="1" height="1" fill="#20e0e0"/><rect x="423" y="467" width="1" height="1" fill="#ff0000"/><rect x="422" y="468" width="1" height="1" fill="#ff0000"/><rect x="421" y="468" width="1" height="1" fill="#ff0000"/><rect x="427" y="467" width="1" height="1" fill="#707070"/><rect x="466" y="467" width="1" height="1" fill="#ff6020"/><rect x="467" y="468" width="1" height="1" fill="#3080e0"/><rect x="411" y="468" width="1" height="1" fill="#a0a0a0"/><rect x="416" y="468" width="1" height="1" fill="#c0e040"/><rect x="418" y="468" width="1" height="1" fill="#d0d0d0"/><rect x="417" y="469" width="1" height="1" fill="#d0d0d0"/><rect x="422" y="468" width="1" height="1" fill="#a0a0a0"/><rect x="425" y="468" width="1" height="1" fill="#c0e040"/><rect x="424" y="469" width="1" height="1" fill="#a0a0a0"/><rect x="439" y="468" width="1" height="1" fill="#a0a0a0"/><rect x="449" y="468" width="1" height="1" fill="#d0d0d0"/><rect x="464" y="468" width="1" height="1" fill="#20e0e0"/><rect x="465" y="469" width="1" height="1" fill="#20e0e0"/><rect x="411" y="469" width="1" height="1" fill="#ffa040"/><rect x="435" y="469" width="1" height="1" fill="#30c0d0"/><rect x="451" y="469" width="1" height="1" fill="#a0a0a0"/><rect x="456" y="469" width="1" height="1" fill="#3080e0"/><rect x="463" y="469" width="1" height="1" fill="#e04080"/><rect x="421" y="470" width="1" height="1" fill="#a0a0a0"/><rect x="433" y="470" width="1" height="1" fill="#707070"/><rect x="432" y="471" width="1" height="1" fill="#707070"/><rect x="432" y="472" width="1" height="1" fill="#707070"/><rect x="462" y="470" width="1" height="1" fill="#d0d0d0"/><rect x="472" y="470" width="1" height="1" fill="#20e0e0"/><rect x="411" y="471" width="1" height="1" fill="#e04080"/><rect x="421" y="471" width="1" height="1" fill="#ff0000"/><rect x="423" y="471" width="1" height="1" fill="#ffffff"/><rect x="422" y="472" width="1" height="1" fill="#6060c0"/><rect x="456" y="471" width="1" height="1" fill="#707070"/><rect x="456" y="472" width="1" height="1" fill="#707070"/><rect x="466" y="471" width="1" height="1" fill="#40e080"/><rect x="467" y="472" width="1" height="1" fill="#40e080"/><rect x="416" y="472" width="1" height="1" fill="#c0e040"/><rect x="422" y="472" width="1" height="1" fill="#6060c0"/><rect x="421" y="473" width="1" height="1" fill="#6060c0"/><rect x="420" y="473" width="1" height="1" fill="#707070"/><rect x="425" y="472" width="1" height="1" fill="#c0e040"/><rect x="426" y="472" width="1" height="1" fill="#6060c0"/><rect x="444" y="472" width="1" height="1" fill="#707070"/><rect x="447" y="472" width="1" height="1" fill="#ff0000"/><rect x="447" y="473" width="1" height="1" fill="#ff0000"/><rect x="452" y="472" width="1" height="1" fill="#40e080"/><rect x="452" y="473" width="1" height="1" fill="#707070"/><rect x="452" y="474" width="1" height="1" fill="#40e080"/><rect x="460" y="472" width="1" height="1" fill="#a0a0a0"/><rect x="460" y="473" width="1" height="1" fill="#a0a0a0"/><rect x="461" y="474" width="1" height="1" fill="#a0a0a0"/><rect x="470" y="472" width="1" height="1" fill="#3080e0"/><rect x="471" y="472" width="1" height="1" fill="#ff6020"/><rect x="424" y="473" width="1" height="1" fill="#d0d0d0"/><rect x="423" y="474" width="1" height="1" fill="#ff0000"/><rect x="426" y="473" width="1" height="1" fill="#ff0000"/><rect x="430" y="473" width="1" height="1" fill="#ffa040"/><rect x="468" y="473" width="1" height="1" fill="#40e080"/><rect x="478" y="473" width="1" height="1" fill="#a0a0a0"/><rect x="417" y="474" width="1" height="1" fill="#707070"/><rect x="419" y="474" width="1" height="1" fill="#ff0000"/><rect x="423" y="474" width="1" height="1" fill="#707070"/><rect x="426" y="474" width="1" height="1" fill="#80e060"/><rect x="425" y="475" width="1" height="1" fill="#a0a0a0"/><rect x="450" y="474" width="1" height="1" fill="#3080e0"/><rect x="465" y="474" width="1" height="1" fill="#ff6020"/><rect x="466" y="475" width="1" height="1" fill="#ff6020"/><rect x="467" y="474" width="1" height="1" fill="#40e080"/><rect x="471" y="474" width="1" height="1" fill="#d0d0d0"/><rect x="415" y="475" width="1" height="1" fill="#20e0e0"/><rect x="418" y="475" width="1" height="1" fill="#707070"/><rect x="423" y="475" width="1" height="1" fill="#b040c0"/><rect x="422" y="476" width="1" height="1" fill="#b040c0"/><rect x="425" y="475" width="1" height="1" fill="#707070"/><rect x="430" y="475" width="1" height="1" fill="#80e060"/><rect x="429" y="476" width="1" height="1" fill="#80e060"/><rect x="434" y="475" width="1" height="1" fill="#20e0e0"/><rect x="433" y="476" width="1" height="1" fill="#20e0e0"/><rect x="433" y="477" width="1" height="1" fill="#20e0e0"/><rect x="461" y="475" width="1" height="1" fill="#a0a0a0"/><rect x="418" y="476" width="1" height="1" fill="#20e0e0"/><rect x="419" y="476" width="1" height="1" fill="#707070"/><rect x="425" y="476" width="1" height="1" fill="#40e080"/><rect x="424" y="477" width="1" height="1" fill="#40e080"/><rect x="424" y="477" width="1" height="1" fill="#40e080"/><rect x="430" y="476" width="1" height="1" fill="#40e080"/><rect x="450" y="476" width="1" height="1" fill="#3080e0"/><rect x="450" y="477" width="1" height="1" fill="#3080e0"/><rect x="463" y="476" width="1" height="1" fill="#80e060"/><rect x="467" y="476" width="1" height="1" fill="#a0a0a0"/><rect x="471" y="476" width="1" height="1" fill="#ffa040"/><rect x="472" y="477" width="1" height="1" fill="#ffa040"/><rect x="472" y="478" width="1" height="1" fill="#ffa040"/><rect x="476" y="476" width="1" height="1" fill="#a0a0a0"/><rect x="428" y="477" width="1" height="1" fill="#3080e0"/><rect x="427" y="478" width="1" height="1" fill="#d0d0d0"/><rect x="430" y="477" width="1" height="1" fill="#20e0e0"/><rect x="468" y="477" width="1" height="1" fill="#80e060"/><rect x="471" y="477" width="1" height="1" fill="#3080e0"/><rect x="482" y="477" width="1" height="1" fill="#ff0000"/><rect x="483" y="478" width="1" height="1" fill="#ff0000"/><rect x="419" y="478" width="1" height="1" fill="#d0d0d0"/><rect x="420" y="478" width="1" height="1" fill="#3080e0"/><rect x="425" y="478" width="1" height="1" fill="#707070"/><rect x="429" y="478" width="1" height="1" fill="#707070"/><rect x="417" y="479" width="1" height="1" fill="#a0a0a0"/><rect x="416" y="480" width="1" height="1" fill="#a0a0a0"/><rect x="419" y="479" width="1" height="1" fill="#6060c0"/><rect x="418" y="480" width="1" height="1" fill="#6060c0"/><rect x="429" y="479" width="1" height="1" fill="#40e080"/><rect x="433" y="479" width="1" height="1" fill="#40e080"/><rect x="433" y="480" width="1" height="1" fill="#40e080"/><rect x="471" y="479" width="1" height="1" fill="#b040c0"/><rect x="475" y="479" width="1" height="1" fill="#20e0e0"/><rect x="478" y="479" width="1" height="1" fill="#d0d0d0"/><rect x="483" y="479" width="1" height="1" fill="#3080e0"/><rect x="484" y="480" width="1" height="1" fill="#40e080"/><rect x="486" y="479" width="1" height="1" fill="#ff6020"/><rect x="487" y="479" width="1" height="1" fill="#ffffff"/><rect x="421" y="480" width="1" height="1" fill="#a0a0a0"/><rect x="420" y="481" width="1" height="1" fill="#a0a0a0"/><rect x="424" y="480" width="1" height="1" fill="#20e0e0"/><rect x="425" y="480" width="1" height="1" fill="#a0a0a0"/><rect x="424" y="481" width="1" height="1" fill="#a0a0a0"/><rect x="426" y="480" width="1" height="1" fill="#c0e040"/><rect x="477" y="480" width="1" height="1" fill="#d0d0d0"/><rect x="480" y="480" width="1" height="1" fill="#ffffff"/><rect x="483" y="480" width="1" height="1" fill="#40e080"/><rect x="419" y="481" width="1" height="1" fill="#a0a0a0"/><rect x="424" y="481" width="1" height="1" fill="#ffa040"/><rect x="423" y="482" width="1" height="1" fill="#ffa040"/><rect x="423" y="483" width="1" height="1" fill="#ffa040"/><rect x="427" y="481" width="1" height="1" fill="#707070"/><rect x="435" y="481" width="1" height="1" fill="#20e0e0"/><rect x="477" y="481" width="1" height="1" fill="#c0e040"/><rect x="489" y="481" width="1" height="1" fill="#6060c0"/><rect x="419" y="482" width="1" height="1" fill="#ffa040"/><rect x="425" y="482" width="1" height="1" fill="#30c0d0"/><rect x="424" y="483" width="1" height="1" fill="#30c0d0"/><rect x="426" y="482" width="1" height="1" fill="#d0d0d0"/><rect x="425" y="483" width="1" height="1" fill="#d0d0d0"/><rect x="428" y="482" width="1" height="1" fill="#707070"/><rect x="429" y="482" width="1" height="1" fill="#ffffff"/><rect x="428" y="483" width="1" height="1" fill="#707070"/><rect x="431" y="482" width="1" height="1" fill="#ff0000"/><rect x="433" y="482" width="1" height="1" fill="#707070"/><rect x="433" y="483" width="1" height="1" fill="#a0a0a0"/><rect x="453" y="482" width="1" height="1" fill="#20e0e0"/><rect x="493" y="482" width="1" height="1" fill="#ff0000"/><rect x="429" y="483" width="1" height="1" fill="#ffa040"/><rect x="433" y="483" width="1" height="1" fill="#e04080"/><rect x="436" y="483" width="1" height="1" fill="#d0d0d0"/><rect x="437" y="483" width="1" height="1" fill="#a0a0a0"/><rect x="440" y="483" width="1" height="1" fill="#ffffff"/><rect x="440" y="484" width="1" height="1" fill="#ffa040"/><rect x="458" y="483" width="1" height="1" fill="#ff0000"/><rect x="483" y="483" width="1" height="1" fill="#80e060"/><rect x="426" y="484" width="1" height="1" fill="#ff0000"/><rect x="427" y="484" width="1" height="1" fill="#707070"/><rect x="426" y="485" width="1" height="1" fill="#707070"/><rect x="430" y="484" width="1" height="1" fill="#a0a0a0"/><rect x="430" y="485" width="1" height="1" fill="#20e0e0"/><rect x="436" y="484" width="1" height="1" fill="#20e0e0"/><rect x="440" y="484" width="1" height="1" fill="#d0d0d0"/><rect x="479" y="484" width="1" height="1" fill="#ff0000"/><rect x="480" y="485" width="1" height="1" fill="#ffa040"/><rect x="483" y="484" width="1" height="1" fill="#3080e0"/><rect x="495" y="484" width="1" height="1" fill="#ff0000"/><rect x="427" y="485" width="1" height="1" fill="#707070"/><rect x="426" y="486" width="1" height="1" fill="#ff0000"/><rect x="428" y="485" width="1" height="1" fill="#ffffff"/><rect x="429" y="485" width="1" height="1" fill="#ff6020"/><rect x="441" y="485" width="1" height="1" fill="#30c0d0"/><rect x="466" y="485" width="1" height="1" fill="#6060c0"/><rect x="466" y="486" width="1" height="1" fill="#20e0e0"/><rect x="468" y="485" width="1" height="1" fill="#80e060"/><rect x="468" y="486" width="1" height="1" fill="#40e080"/><rect x="472" y="485" width="1" height="1" fill="#e04080"/><rect x="476" y="485" width="1" height="1" fill="#30c0d0"/><rect x="478" y="485" width="1" height="1" fill="#ff6020"/><rect x="487" y="485" width="1" height="1" fill="#707070"/><rect x="490" y="485" width="1" height="1" fill="#30c0d0"/><rect x="495" y="485" width="1" height="1" fill="#707070"/><rect x="499" y="485" width="1" height="1" fill="#e04080"/><rect x="430" y="486" width="1" height="1" fill="#c0e040"/><rect x="430" y="487" width="1" height="1" fill="#c0e040"/><rect x="437" y="486" width="1" height="1" fill="#d0d0d0"/><rect x="437" y="487" width="1" height="1" fill="#d0d0d0"/><rect x="436" y="488" width="1" height="1" fill="#d0d0d0"/><rect x="444" y="486" width="1" height="1" fill="#30c0d0"/><rect x="469" y="486" width="1" height="1" fill="#20e0e0"/><rect x="473" y="486" width="1" height="1" fill="#40e080"/><rect x="474" y="487" width="1" height="1" fill="#a0a0a0"/><rect x="475" y="486" width="1" height="1" fill="#ffa040"/><rect x="480" y="486" width="1" height="1" fill="#20e0e0"/><rect x="484" y="486" width="1" height="1" fill="#80e060"/><rect x="485" y="486" width="1" height="1" fill="#40e080"/><rect x="486" y="487" width="1" height="1" fill="#40e080"/><rect x="489" y="486" width="1" height="1" fill="#20e0e0"/><rect x="497" y="486" width="1" height="1" fill="#ffffff"/><rect x="498" y="487" width="1" height="1" fill="#ffa040"/><rect x="499" y="487" width="1" height="1" fill="#ff6020"/><rect x="424" y="487" width="1" height="1" fill="#40e080"/><rect x="429" y="487" width="1" height="1" fill="#30c0d0"/><rect x="429" y="488" width="1" height="1" fill="#30c0d0"/><rect x="428" y="489" width="1" height="1" fill="#30c0d0"/><rect x="463" y="487" width="1" height="1" fill="#ff0000"/><rect x="465" y="487" width="1" height="1" fill="#20e0e0"/><rect x="465" y="488" width="1" height="1" fill="#ff6020"/><rect x="468" y="487" width="1" height="1" fill="#707070"/><rect x="476" y="487" width="1" height="1" fill="#ffa040"/><rect x="429" y="488" width="1" height="1" fill="#ffffff"/><rect x="430" y="488" width="1" height="1" fill="#ff0000"/><rect x="434" y="488" width="1" height="1" fill="#707070"/><rect x="435" y="488" width="1" height="1" fill="#e04080"/><rect x="435" y="489" width="1" height="1" fill="#e04080"/><rect x="434" y="490" width="1" height="1" fill="#e04080"/><rect x="438" y="488" width="1" height="1" fill="#ff0000"/><rect x="455" y="488" width="1" height="1" fill="#a0a0a0"/><rect x="462" y="488" width="1" height="1" fill="#e04080"/><rect x="472" y="488" width="1" height="1" fill="#ffffff"/><rect x="473" y="489" width="1" height="1" fill="#ffffff"/><rect x="500" y="488" width="1" height="1" fill="#80e060"/><rect x="433" y="489" width="1" height="1" fill="#e04080"/><rect x="433" y="490" width="1" height="1" fill="#e04080"/><rect x="432" y="491" width="1" height="1" fill="#20e0e0"/><rect x="439" y="489" width="1" height="1" fill="#a0a0a0"/><rect x="440" y="489" width="1" height="1" fill="#ffa040"/><rect x="440" y="490" width="1" height="1" fill="#ffa040"/><rect x="440" y="491" width="1" height="1" fill="#ffa040"/><rect x="450" y="489" width="1" height="1" fill="#3080e0"/><rect x="452" y="489" width="1" height="1" fill="#a0a0a0"/><rect x="453" y="489" width="1" height="1" fill="#80e060"/><rect x="459" y="489" width="1" height="1" fill="#d0d0d0"/><rect x="466" y="489" width="1" height="1" fill="#ffa040"/><rect x="466" y="490" width="1" height="1" fill="#ffa040"/><rect x="469" y="489" width="1" height="1" fill="#40e080"/><rect x="430" y="490" width="1" height="1" fill="#3080e0"/><rect x="439" y="490" width="1" height="1" fill="#a0a0a0"/><rect x="450" y="490" width="1" height="1" fill="#ff0000"/><rect x="455" y="490" width="1" height="1" fill="#40e080"/><rect x="456" y="490" width="1" height="1" fill="#ffa040"/><rect x="458" y="490" width="1" height="1" fill="#20e0e0"/><rect x="458" y="491" width="1" height="1" fill="#b040c0"/><rect x="462" y="490" width="1" height="1" fill="#c0e040"/><rect x="464" y="490" width="1" height="1" fill="#a0a0a0"/><rect x="465" y="490" width="1" height="1" fill="#40e080"/><rect x="475" y="490" width="1" height="1" fill="#d0d0d0"/><rect x="500" y="490" width="1" height="1" fill="#ffffff"/><rect x="501" y="491" width="1" height="1" fill="#ffffff"/><rect x="429" y="491" width="1" height="1" fill="#40e080"/><rect x="429" y="492" width="1" height="1" fill="#40e080"/><rect x="434" y="491" width="1" height="1" fill="#20e0e0"/><rect x="435" y="491" width="1" height="1" fill="#20e0e0"/><rect x="435" y="492" width="1" height="1" fill="#20e0e0"/><rect x="436" y="491" width="1" height="1" fill="#ff6020"/><rect x="436" y="492" width="1" height="1" fill="#20e0e0"/><rect x="435" y="493" width="1" height="1" fill="#20e0e0"/><rect x="438" y="491" width="1" height="1" fill="#c0e040"/><rect x="438" y="492" width="1" height="1" fill="#20e0e0"/><rect x="439" y="491" width="1" height="1" fill="#40e080"/><rect x="439" y="492" width="1" height="1" fill="#d0d0d0"/><rect x="440" y="491" width="1" height="1" fill="#40e080"/><rect x="443" y="491" width="1" height="1" fill="#6060c0"/><rect x="445" y="491" width="1" height="1" fill="#ffffff"/><rect x="445" y="492" width="1" height="1" fill="#d0d0d0"/><rect x="449" y="491" width="1" height="1" fill="#30c0d0"/><rect x="457" y="491" width="1" height="1" fill="#20e0e0"/><rect x="457" y="492" width="1" height="1" fill="#c0e040"/><rect x="466" y="491" width="1" height="1" fill="#30c0d0"/><rect x="466" y="492" width="1" height="1" fill="#30c0d0"/><rect x="492" y="491" width="1" height="1" fill="#3080e0"/><rect x="435" y="492" width="1" height="1" fill="#707070"/><rect x="437" y="492" width="1" height="1" fill="#c0e040"/><rect x="437" y="493" width="1" height="1" fill="#c0e040"/><rect x="440" y="492" width="1" height="1" fill="#40e080"/><rect x="455" y="492" width="1" height="1" fill="#20e0e0"/><rect x="456" y="492" width="1" height="1" fill="#ffffff"/><rect x="460" y="492" width="1" height="1" fill="#40e080"/><rect x="467" y="492" width="1" height="1" fill="#20e0e0"/><rect x="467" y="493" width="1" height="1" fill="#20e0e0"/><rect x="472" y="492" width="1" height="1" fill="#40e080"/><rect x="472" y="493" width="1" height="1" fill="#3080e0"/><rect x="473" y="494" width="1" height="1" fill="#40e080"/><rect x="493" y="492" width="1" height="1" fill="#b040c0"/><rect x="494" y="492" width="1" height="1" fill="#707070"/><rect x="434" y="493" width="1" height="1" fill="#6060c0"/><rect x="434" y="494" width="1" height="1" fill="#c0e040"/><rect x="439" y="493" width="1" height="1" fill="#80e060"/><rect x="439" y="494" width="1" height="1" fill="#80e060"/><rect x="440" y="493" width="1" height="1" fill="#c0e040"/><rect x="446" y="493" width="1" height="1" fill="#20e0e0"/><rect x="449" y="493" width="1" height="1" fill="#40e080"/><rect x="449" y="494" width="1" height="1" fill="#40e080"/><rect x="450" y="493" width="1" height="1" fill="#30c0d0"/><rect x="453" y="493" width="1" height="1" fill="#ffffff"/><rect x="465" y="493" width="1" height="1" fill="#e04080"/><rect x="465" y="494" width="1" height="1" fill="#e04080"/><rect x="466" y="495" width="1" height="1" fill="#e04080"/><rect x="473" y="493" width="1" height="1" fill="#ff0000"/><rect x="473" y="494" width="1" height="1" fill="#6060c0"/><rect x="474" y="495" width="1" height="1" fill="#ff0000"/><rect x="475" y="493" width="1" height="1" fill="#40e080"/><rect x="431" y="494" width="1" height="1" fill="#707070"/><rect x="435" y="494" width="1" height="1" fill="#3080e0"/><rect x="435" y="495" width="1" height="1" fill="#3080e0"/><rect x="437" y="494" width="1" height="1" fill="#ff6020"/><rect x="437" y="495" width="1" height="1" fill="#80e060"/><rect x="436" y="496" width="1" height="1" fill="#ff6020"/><rect x="441" y="494" width="1" height="1" fill="#30c0d0"/><rect x="441" y="495" width="1" height="1" fill="#30c0d0"/><rect x="447" y="494" width="1" height="1" fill="#30c0d0"/><rect x="450" y="494" width="1" height="1" fill="#3080e0"/><rect x="450" y="495" width="1" height="1" fill="#3080e0"/><rect x="450" y="496" width="1" height="1" fill="#40e080"/><rect x="462" y="494" width="1" height="1" fill="#ff6020"/><rect x="465" y="494" width="1" height="1" fill="#d0d0d0"/><rect x="435" y="495" width="1" height="1" fill="#ff0000"/><rect x="437" y="495" width="1" height="1" fill="#ffffff"/><rect x="437" y="496" width="1" height="1" fill="#a0a0a0"/><rect x="436" y="497" width="1" height="1" fill="#ffffff"/><rect x="439" y="495" width="1" height="1" fill="#80e060"/><rect x="448" y="495" width="1" height="1" fill="#30c0d0"/><rect x="448" y="496" width="1" height="1" fill="#6060c0"/><rect x="449" y="495" width="1" height="1" fill="#20e0e0"/><rect x="451" y="495" width="1" height="1" fill="#20e0e0"/><rect x="451" y="496" width="1" height="1" fill="#6060c0"/><rect x="451" y="497" width="1" height="1" fill="#20e0e0"/><rect x="457" y="495" width="1" height="1" fill="#ff0000"/><rect x="457" y="496" width="1" height="1" fill="#d0d0d0"/><rect x="457" y="497" width="1" height="1" fill="#ff0000"/><rect x="466" y="495" width="1" height="1" fill="#3080e0"/><rect x="434" y="496" width="1" height="1" fill="#20e0e0"/><rect x="434" y="497" width="1" height="1" fill="#20e0e0"/><rect x="436" y="496" width="1" height="1" fill="#80e060"/><rect x="443" y="496" width="1" height="1" fill="#ff0000"/><rect x="445" y="496" width="1" height="1" fill="#40e080"/><rect x="460" y="496" width="1" height="1" fill="#ff0000"/><rect x="463" y="496" width="1" height="1" fill="#40e080"/><rect x="442" y="497" width="1" height="1" fill="#30c0d0"/><rect x="443" y="497" width="1" height="1" fill="#30c0d0"/><rect x="443" y="498" width="1" height="1" fill="#d0d0d0"/><rect x="443" y="499" width="1" height="1" fill="#30c0d0"/><rect x="444" y="497" width="1" height="1" fill="#40e080"/><rect x="446" y="497" width="1" height="1" fill="#ff0000"/><rect x="447" y="497" width="1" height="1" fill="#30c0d0"/><rect x="447" y="498" width="1" height="1" fill="#30c0d0"/><rect x="455" y="497" width="1" height="1" fill="#707070"/><rect x="455" y="498" width="1" height="1" fill="#3080e0"/><rect x="455" y="499" width="1" height="1" fill="#707070"/><rect x="460" y="497" width="1" height="1" fill="#a0a0a0"/><rect x="439" y="498" width="1" height="1" fill="#40e080"/><rect x="439" y="499" width="1" height="1" fill="#ffa040"/><rect x="443" y="498" width="1" height="1" fill="#ffffff"/><rect x="443" y="499" width="1" height="1" fill="#30c0d0"/><rect x="445" y="498" width="1" height="1" fill="#a0a0a0"/><rect x="457" y="498" width="1" height="1" fill="#c0e040"/><rect x="440" y="499" width="1" height="1" fill="#b040c0"/><rect x="441" y="499" width="1" height="1" fill="#30c0d0"/><rect x="442" y="499" width="1" height="1" fill="#6060c0"/><rect x="443" y="499" width="1" height="1" fill="#20e0e0"/><rect x="447" y="499" width="1" height="1" fill="#30c0d0"/><rect x="447" y="500" width="1" height="1" fill="#a0a0a0"/><rect x="447" y="501" width="1" height="1" fill="#a0a0a0"/><rect x="449" y="500" width="1" height="1" fill="#30c0d0"/><rect x="443" y="501" width="1" height="1" fill="#ffa040"/><rect x="446" y="501" width="1" height="1" fill="#20e0e0"/><rect x="451" y="501" width="1" height="1" fill="#ff0000"/><rect x="451" y="502" width="1" height="1" fill="#ff0000"/><rect x="441" y="502" width="1" height="1" fill="#c0e040"/><rect x="447" y="502" width="1" height="1" fill="#20e0e0"/><rect x="449" y="502" width="1" height="1" fill="#ff0000"/><rect x="444" y="503" width="1" height="1" fill="#707070"/><rect x="447" y="418" width="1" height="1" fill="#40e080"/><rect x="468" y="418" width="1" height="1" fill="#707070"/><rect x="468" y="419" width="1" height="1" fill="#3080e0"/><rect x="389" y="416" width="1" height="1" fill="#ff0000"/><rect x="389" y="417" width="1" height="1" fill="#ffa040"/><rect x="393" y="418" width="1" height="1" fill="#c0e040"/><rect x="473" y="418" width="1" height="1" fill="#40e080"/><rect x="420" y="417" width="1" height="1" fill="#e04080"/><rect x="420" y="418" width="1" height="1" fill="#20e0e0"/><rect x="411" y="417" width="1" height="1" fill="#d0d0d0"/><rect x="411" y="418" width="1" height="1" fill="#c0e040"/><rect x="411" y="419" width="1" height="1" fill="#c0e040"/><rect x="415" y="411" width="1" height="1" fill="#d0d0d0"/><rect x="415" y="412" width="1" height="1" fill="#d0d0d0"/><rect x="415" y="413" width="1" height="1" fill="#40e080"/><rect x="412" y="413" width="1" height="1" fill="#a0a0a0"/><rect x="412" y="414" width="1" height="1" fill="#e04080"/><rect x="388" y="417" width="1" height="1" fill="#3080e0"/><rect x="388" y="418" width="1" height="1" fill="#ff6020"/><rect x="388" y="419" width="1" height="1" fill="#3080e0"/><rect x="399" y="416" width="1" height="1" fill="#80e060"/><rect x="399" y="417" width="1" height="1" fill="#a0a0a0"/><rect x="399" y="418" width="1" height="1" fill="#20e0e0"/><rect x="423" y="411" width="1" height="1" fill="#20e0e0"/><rect x="449" y="413" width="1" height="1" fill="#707070"/><rect x="449" y="414" width="1" height="1" fill="#d0d0d0"/><rect x="449" y="415" width="1" height="1" fill="#a0a0a0"/><rect x="451" y="416" width="1" height="1" fill="#40e080"/><rect x="451" y="417" width="1" height="1" fill="#d0d0d0"/><rect x="451" y="418" width="1" height="1" fill="#b040c0"/><rect x="405" y="417" width="1" height="1" fill="#3080e0"/><rect x="405" y="418" width="1" height="1" fill="#20e0e0"/><rect x="438" y="415" width="1" height="1" fill="#707070"/><rect x="438" y="416" width="1" height="1" fill="#40e080"/><rect x="471" y="415" width="1" height="1" fill="#30c0d0"/><rect x="382" y="414" width="1" height="1" fill="#a0a0a0"/><rect x="382" y="415" width="1" height="1" fill="#707070"/><rect x="382" y="416" width="1" height="1" fill="#6060c0"/><rect x="382" y="415" width="1" height="1" fill="#20e0e0"/><rect x="468" y="410" width="1" height="1" fill="#d0d0d0"/><rect x="468" y="411" width="1" height="1" fill="#20e0e0"/><rect x="468" y="412" width="1" height="1" fill="#c0e040"/><rect x="386" y="410" width="1" height="1" fill="#20e0e0"/><rect x="386" y="411" width="1" height="1" fill="#a0a0a0"/><rect x="386" y="412" width="1" height="1" fill="#707070"/><rect x="391" y="410" width="1" height="1" fill="#c0e040"/><rect x="391" y="411" width="1" height="1" fill="#3080e0"/><rect x="439" y="466" width="1" height="1" fill="#80e060"/><rect x="406" y="458" width="1" height="1" fill="#a0a0a0"/><rect x="448" y="448" width="1" height="1" fill="#d0d0d0"/><rect x="377" y="431" width="1" height="1" fill="#a0a0a0"/><rect x="407" y="429" width="1" height="1" fill="#a0a0a0"/><rect x="394" y="446" width="1" height="1" fill="#3080e0"/><rect x="468" y="502" width="1" height="1" fill="#a0a0a0"/><rect x="418" y="427" width="1" height="1" fill="#d0d0d0"/><rect x="489" y="410" width="1" height="1" fill="#707070"/><rect x="473" y="462" width="1" height="1" fill="#20e0e0"/><rect x="490" y="506" width="1" height="1" fill="#3080e0"/><rect x="374" y="507" width="1" height="1" fill="#c0e040"/><rect x="414" y="494" width="1" height="1" fill="#ff0000"/><rect x="492" y="503" width="1" height="1" fill="#a0a0a0"/><rect x="444" y="461" width="1" height="1" fill="#ffffff"/><rect x="390" y="410" width="1" height="1" fill="#c0e040"/><rect x="469" y="418" width="1" height="1" fill="#40e080"/><rect x="452" y="447" width="1" height="1" fill="#d0d0d0"/><rect x="442" y="502" width="1" height="1" fill="#e04080"/><rect x="485" y="479" width="1" height="1" fill="#ff0000"/><rect x="375" y="436" width="1" height="1" fill="#ff6020"/><rect x="390" y="433" width="1" height="1" fill="#707070"/><rect x="372" y="497" width="1" height="1" fill="#ff0000"/><rect x="439" y="436" width="1" height="1" fill="#30c0d0"/><rect x="492" y="510" width="1" height="1" fill="#ffffff"/><rect x="502" y="428" width="1" height="1" fill="#20e0e0"/><rect x="364" y="429" width="1" height="1" fill="#40e080"/><rect x="365" y="464" width="1" height="1" fill="#a0a0a0"/><rect x="412" y="411" width="1" height="1" fill="#ffffff"/><rect x="454" y="453" width="1" height="1" fill="#a0a0a0"/><rect x="383" y="443" width="1" height="1" fill="#ffa040"/><rect x="480" y="488" width="1" height="1" fill="#ffa040"/><rect x="489" y="426" width="1" height="1" fill="#e04080"/><rect x="446" y="433" width="1" height="1" fill="#707070"/><rect x="448" y="433" width="1" height="1" fill="#ffffff"/><rect x="458" y="446" width="1" height="1" fill="#ff0000"/><rect x="485" y="504" width="1" height="1" fill="#80e060"/><rect x="502" y="488" width="1" height="1" fill="#30c0d0"/><rect x="439" y="427" width="1" height="1" fill="#ff6020"/><rect x="370" y="418" width="1" height="1" fill="#a0a0a0"/><rect x="505" y="500" width="1" height="1" fill="#a0a0a0"/><rect x="451" y="474" width="1" height="1" fill="#a0a0a0"/><rect x="360" y="459" width="1" height="1" fill="#40e080"/><rect x="377" y="471" width="1" height="1" fill="#ffffff"/><rect x="455" y="422" width="1" height="1" fill="#20e0e0"/><rect x="493" y="369" width="1" height="1" fill="#e0d858"/><rect x="361" y="452" width="1" height="1" fill="#ff0000"/><rect x="362" y="452" width="1" height="1" fill="#ff0000"/><rect x="361" y="453" width="1" height="1" fill="#ff0000"/><rect x="362" y="453" width="1" height="1" fill="#ff0000"/><rect x="361" y="454" width="1" height="1" fill="#ff0000"/><rect x="362" y="454" width="1" height="1" fill="#ff0000"/><rect x="363" y="453" width="1" height="1" fill="#a0f070"/><rect x="363" y="454" width="1" height="1" fill="#a0f070"/><rect x="364" y="453" width="1" height="1" fill="#ff0000"/><rect x="364" y="454" width="1" height="1" fill="#ff0000"/><rect x="361" y="455" width="1" height="1" fill="#ff0000"/><rect x="363" y="455" width="1" height="1" fill="#ff0000"/><rect x="361" y="456" width="1" height="1" fill="#ff0000"/><rect x="363" y="456" width="1" height="1" fill="#ff0000"/><rect x="362" y="457" width="1" height="1" fill="#ff0000"/><rect x="374" y="557" width="1" height="1" fill="#a0a0a0"/><rect x="495" y="581" width="1" height="1" fill="#80e070"/><rect x="540" y="420" width="1" height="1" fill="#40d0c0"/><rect x="545" y="422" width="1" height="1" fill="#e0d858"/><rect x="556" y="419" width="1" height="1" fill="#c8c8c8"/><rect x="563" y="428" width="1" height="1" fill="#c8c8c8"/><rect x="565" y="430" width="1" height="1" fill="#a0a0a0"/><rect x="567" y="433" width="1" height="1" fill="#e0e0e0"/><rect x="555" y="414" width="1" height="1" fill="#ffffff"/><rect x="573" y="430" width="1" height="1" fill="#40d0c0"/><rect x="575" y="433" width="1" height="1" fill="#80e070"/><rect x="578" y="437" width="1" height="1" fill="#d80808"/><rect x="486" y="402" width="1" height="1" fill="#c8c8c8"/><rect x="494" y="404" width="1" height="1" fill="#e0d858"/><rect x="497" y="407" width="1" height="1" fill="#80e070"/><rect x="500" y="412" width="1" height="1" fill="#d80808"/><rect x="652" y="455" width="1" height="1" fill="#d80808"/><rect x="653" y="456" width="1" height="1" fill="#80e070"/><rect x="652" y="457" width="1" height="1" fill="#e0d858"/><rect x="654" y="457" width="1" height="1" fill="#3090c8"/><rect x="653" y="453" width="1" height="1" fill="#909090"/><rect x="649" y="450" width="1" height="1" fill="#585858"/><rect x="649" y="451" width="1" height="1" fill="#585858"/><rect x="650" y="456" width="1" height="1" fill="#d80808"/><rect x="651" y="456" width="1" height="1" fill="#d80808"/><rect x="650" y="457" width="1" height="1" fill="#40d0c0"/><rect x="651" y="458" width="1" height="1" fill="#80e070"/><rect x="652" y="458" width="1" height="1" fill="#80e070"/><rect x="650" y="459" width="1" height="1" fill="#e0d858"/><rect x="653" y="459" width="1" height="1" fill="#c8c8c8"/><rect x="654" y="459" width="1" height="1" fill="#3090c8"/><rect x="649" y="461" width="1" height="1" fill="#585858"/><rect x="649" y="462" width="1" height="1" fill="#585858"/><rect x="641" y="444" width="1" height="1" fill="#40d0c0"/><rect x="641" y="445" width="1" height="1" fill="#40d0c0"/><rect x="640" y="449" width="1" height="1" fill="#f8a048"/><rect x="639" y="450" width="1" height="1" fill="#3090c8"/><rect x="658" y="469" width="1" height="1" fill="#e8e8e8"/><rect x="626" y="438" width="1" height="1" fill="#e8e8e8"/><rect x="628" y="438" width="1" height="1" fill="#ffffff"/><rect x="514" y="401" width="1" height="1" fill="#40d0c0"/><rect x="520" y="421" width="1" height="1" fill="#f8a048"/><rect x="531" y="412" width="1" height="1" fill="#c8c8c8"/><rect x="533" y="412" width="1" height="1" fill="#c8c8c8"/><rect x="561" y="426" width="1" height="1" fill="#909090"/><rect x="570" y="435" width="1" height="1" fill="#40d0c0"/><rect x="525" y="420" width="1" height="1" fill="#80e070"/><rect x="488" y="420" width="1" height="1" fill="#d80808"/><rect x="493" y="425" width="1" height="1" fill="#e0d858"/><rect x="481" y="435" width="1" height="1" fill="#40d0c0"/><rect x="548" y="425" width="1" height="1" fill="#585858"/><rect x="551" y="427" width="1" height="1" fill="#c8c8c8"/></g>
<g fill="none" stroke="#ff0000" stroke-width="1" shape-rendering="crispEdges"><path d="M529.5,0.0 L529.5,12.5 L536.5,12.5 L536.5,50.0 L537.5,51.0 L537.5,89.5 L544.5,89.5 L545.5,166.5 L570.5,166.5 L570.5,205.5 L591.5,205.5 L591.5,237.5 L592.5,238.5 L592.5,243.5 L845.5,243.5"/><path d="M646.5,779.5 L651.5,786.5 L705.5,786.5 L719.5,765.5 L741.5,751.5 L761.5,746.5 L762.5,764.5 L790.5,764.5 L791.5,783.5 L845.5,783.5"/><path d="M886.5,810.0 L890.0,885.0 L885.0,887.5"/></g>
<g fill="none" stroke="#ff0000" stroke-width="1" shape-rendering="crispEdges"><path d="M196.7,199.2 L195.8,188.3 L201.7,183.3 L213.3,180.8 L220.0,182.5 L238.3,182.5 L248.3,178.3 L249.2,170.0 L243.3,166.7 L242.5,161.7 L253.3,161.7 L251.7,158.3"/><path d="M220.0,182.5 L219.2,188.3 L210.0,193.3 L201.7,199.2 L196.7,199.2"/><path d="M226.7,173.3 L233.3,168.3 L233.3,175.0 L230.0,177.5 L226.7,173.3"/><path d="M270.0,143.3 L275.0,148.3 L281.7,151.7 L293.3,145.8 L295.8,141.7 L305.0,136.7 L306.7,133.3 L304.2,128.3 L301.7,123.3 L296.7,125.0 L306.7,116.7 L310.0,115.0 L313.3,116.7 L314.2,123.3 L308.3,123.3 L306.7,118.3 L315.0,115.0 L316.7,106.7 L321.7,103.3 L331.3,98.4 L340.0,93.5 L347.8,88.7 L357.0,84.0 L362.9,80.2 L367.8,79.3 L373.3,81.7 L378.3,86.7 L380.0,93.3 L393.3,91.7 L403.3,95.0 L410.0,95.0 L416.7,92.5 L423.3,88.3 L426.7,85.0 L423.3,80.0 L418.3,74.2 L410.0,70.8 L400.0,70.0 L396.7,65.0 L400.0,58.3 L406.7,50.0 L411.7,43.3"/><path d="M270.0,141.7 L276.7,148.3 L281.7,151.7 L288.3,148.3 L295.0,143.3 L298.3,140.0"/><path d="M443.3,26.7 L452.0,23.0 L456.7,21.7 L464.0,20.5 L468.3,20.0 L473.3,21.7 L476.7,23.3 L475.0,28.3 L473.3,32.5 L471.7,26.7 L476.7,23.3 L480.0,22.5 L481.0,18.0 L485.0,14.0 L493.0,7.0 L498.3,3.3 L501.7,0.0"/><path d="M430.0,86.7 L435.0,86.7"/><path d="M305.8,277.6 L301.3,281.1 L297.8,288.2 L295.1,298.9 L294.2,302.4 L296.0,307.8 L297.8,311.3 L300.4,314.0 L301.3,317.6"/><path d="M305.8,277.6 L306.7,280.2 L305.8,285.6 L303.1,286.4 L299.6,290.0 L297.8,296.2 L297.8,303.3 L299.6,309.6 L303.1,310.4 L306.7,312.2 L309.3,314.0"/><path d="M350.0,271.0 L352.0,270.8 L356.7,270.3 L362.5,273.2 L371.8,276.7 L380.0,283.7 L382.3,288.3 L383.5,293.0 L380.6,296.5 L383.5,298.8 L388.2,302.3 L391.7,303.5 L395.2,308.2 L399.8,309.3 L397.5,305.8 L396.3,298.8 L405.7,298.8 L412.7,300.0 L415.0,305.3 L422.0,304.7 L424.3,300.0 L429.0,302.3 L438.3,303.5 L440.7,294.2 L445.3,296.5 L446.5,301.2 L441.9,301.2 L441.9,308.2 L437.2,310.5 L433.7,315.2 L426.7,316.3 L422.0,321.0 L417.3,329.2 L410.3,325.7 L402.2,323.3 L396.3,317.5 L394.0,311.7 L389.3,308.2 L384.7,301.2 L381.0,296.0"/><path d="M351.0,282.5 L360.2,282.5 L368.3,284.3 L373.0,288.9 L380.0,289.5 L382.3,288.3"/><path d="M297.8,256.7 L306.7,256.7 L312.9,258.4 L318.2,259.8 L323.6,261.6 L327.1,261.1 L331.6,263.3 L336.9,266.4"/><path d="M302.0,260.0 L309.0,262.4 L315.6,264.7 L321.8,266.0"/><path d="M484.8,445.2 L488.7,449.9 L487.9,454.5 L484.0,454.5 L488.7,456.1 L488.7,460.0 L491.0,460.0 L491.8,462.3"/><path d="M483.2,461.5 L490.2,456.1 L493.3,453.8 L501.1,448.3 L511.2,448.3 L515.1,448.3 L520.5,443.3 L526.8,443.3 L530.0,441.0"/><path d="M495.7,458.4 L497.2,460.8 L501.1,458.4 L502.7,456.9"/><path d="M815.7,0.0 L818.1,7.3 L830.3,13.4 L832.8,19.6 L836.5,23.2 L841.3,24.4 L848.7,29.3 L854.8,36.7 L863.3,35.5 L868.2,37.3 L875.6,34.8 L882.9,32.4 L895.1,31.2 L900.0,32.0"/><path d="M751.7,36.7 L750.0,45.0 L753.3,48.3 L754.2,57.5 L760.0,57.5 L755.0,46.7 L751.7,41.7"/><path d="M757.0,66.0 L758.5,65.0 L764.0,67.3 L761.5,70.8 L758.5,67.0"/><path d="M828.3,72.2 L827.2,76.1 L828.3,81.1 L827.8,83.3 L827.2,88.3 L822.8,90.0 L819.4,94.4 L821.1,97.8 L823.9,98.9 L824.4,103.3"/><path d="M836.1,75.6 L834.4,80.6 L832.2,83.3 L832.2,87.8 L828.9,92.2 L824.4,93.3 L821.1,94.4"/><path d="M826.0,67.0 L828.0,65.0 L830.0,65.5 L829.5,68.5"/><path d="M757.2,112.2 L758.3,118.9 L757.2,122.2 L760.6,124.4 L767.2,123.3 L768.3,121.1 L763.9,118.9 L763.9,112.2"/><path d="M755.0,112.2 L752.0,113.5 L753.0,115.5 L755.5,114.0"/><path d="M686.7,108.3 L686.7,116.7 L689.0,112.0"/><path d="M547.3,75.3 L553.3,74.7 L558.0,73.3 L558.7,70.7 L562.0,69.3 L567.3,68.0 L572.0,68.0"/><path d="M558.7,73.3 L562.0,72.7 L565.3,72.0 L568.0,74.0 L569.3,77.3 L571.0,78.0 L568.0,79.0 L565.0,76.0 L562.0,77.0 L559.0,76.0 L558.7,73.3"/><path d="M580.0,48.0 L583.0,50.0 L583.5,53.0"/><path d="M523.3,768.3 L531.7,768.3 L540.0,770.0 L545.0,775.0 L548.3,783.3 L555.0,790.0 L560.0,793.3 L561.7,800.0 L565.0,801.7 L568.3,806.7 L568.3,820.0 L571.7,828.3 L578.3,835.0 L585.0,841.7 L588.3,853.3 L588.3,863.3 L585.0,871.7 L596.7,886.7"/><path d="M524.0,772.0 L532.0,772.0 L542.0,778.0 L546.0,786.0 L553.0,793.0 L558.0,797.0 L560.0,803.0 L566.0,809.0 L566.0,820.0 L570.0,831.0 L577.0,838.0 L583.0,845.0 L586.0,855.0 L586.0,864.0 L583.0,872.0 L593.0,886.7"/><path d="M570.0,808.3 L576.7,805.0 L585.0,804.2"/><path d="M600.0,785.0 L605.0,778.3 L613.3,773.3 L620.0,765.0 L623.3,761.7"/><path d="M491.7,830.0 L500.0,830.0 L510.0,833.3 L513.3,840.0 L525.0,835.0 L528.3,835.0"/><path d="M500.0,871.7 L511.7,866.7 L530.0,841.7 L541.7,841.7 L546.7,848.3 L558.3,848.3 L568.3,851.7 L580.0,870.0 L593.3,886.7"/><path d="M500.0,878.0 L514.0,872.0 L532.0,845.0 L540.0,844.0 L546.0,852.0 L560.0,852.0 L567.0,856.0 L577.0,872.0 L588.0,886.7"/><path d="M478.3,886.7 L491.7,881.7"/><path d="M476.7,880.0 L481.7,871.7 L478.3,868.3"/><path d="M487.0,864.0 L492.0,862.0 L495.0,868.0 L490.0,873.0 L486.0,870.0"/><path d="M515.8,768.3 L518.3,761.7 L521.7,764.2 L518.3,770.0"/><path d="M600.0,788.0 L612.0,776.0 L622.0,764.0 L628.0,758.0"/><path d="M0.0,775.0 L3.8,777.5 L3.8,782.5 L0.0,783.8"/><path d="M92.0,769.0 L95.0,766.0"/><path d="M836.0,533.0 L838.0,538.0"/><path d="M835.8,357.8 L837.6,355.1 L841.1,354.2 L845.6,356.0 L845.6,366.7 L842.9,361.3"/><path d="M782.4,375.6 L784.2,378.2 L782.4,382.7 L786.9,382.7 L792.2,385.3 L793.1,388.0"/><path d="M752.2,404.0 L757.6,403.1 L757.6,406.7 L752.2,405.8 L752.2,404.0"/><path d="M815.8,455.6 L816.7,464.4 L811.3,468.9 L811.3,476.9 L814.0,475.1 L816.7,470.7 L822.9,468.9"/><path d="M834.4,471.6 L843.3,470.7 L845.1,473.3"/><path d="M768.2,402.2 L778.9,395.1 L786.0,391.6"/><path d="M23.0,703.0 L30.0,706.5 L37.0,709.5"/><path d="M45.0,746.0 L52.0,743.5 L61.0,742.5 L62.0,745.5"/><path d="M34.0,752.0 L36.0,756.0 L34.0,760.0"/><path d="M491.5,886.5 L501.5,886.5"/><path d="M492.5,885.5 L500.5,885.5"/><path d="M115.5,172.0 L116.5,169.5 L118.5,168.5 L120.5,168.5 L120.5,172.0 L121.5,174.0 L120.5,175.5 L117.5,175.5 L116.0,174.0 L115.5,172.0"/><path d="M641.0,769.5 L645.0,774.0 L644.0,777.0"/>
<ellipse cx="132.5" cy="202" rx="11.5" ry="11.8"/><ellipse cx="189" cy="346.5" rx="15" ry="15.3"/><ellipse cx="801" cy="652" rx="11.5" ry="11.5"/></g>
<g fill="none" stroke="#ff0000" stroke-width="3.3" stroke-linejoin="round" stroke-linecap="round"><path d="M501.7,-0.6 L490.0,3.4 L470.0,11.3 L445.0,23.3 L420.0,35.5 L395.0,52.2 L370.0,67.7 L345.0,82.4 L325.0,96.8 L305.0,112.4 L285.0,126.2 L260.0,147.5 L250.0,154.5 L233.3,165.0 L216.7,171.7 L205.0,176.7 L193.3,185.0 L189.2,193.3 L190.0,203.3 L195.0,213.3 L210.0,220.0 L223.3,228.3 L233.3,236.7 L246.7,246.7 L263.3,252.5 L280.0,254.4 L288.0,254.9 L297.8,258.9 L306.7,263.3 L317.3,268.7 L322.7,269.6 L328.9,266.9 L336.9,266.9 L344.0,269.6 L350.2,275.8 L352.0,279.3 L342.2,288.2 L340.4,290.9 L341.3,298.9 L337.8,305.1 L329.8,311.3 L322.7,314.9 L313.8,316.7 L304.9,318.4 L302.2,319.3 L306.7,322.9 L312.9,328.2 L318.8,340.0 L330.0,350.0 L340.0,361.7 L346.7,376.7 L338.3,386.7 L339.2,406.7 L346.7,421.7 L355.0,428.3 L373.3,436.7 L400.0,443.3 L430.0,451.7 L455.0,458.3 L470.0,463.1 L476.2,467.0 L481.7,467.4 L493.3,465.4 L505.0,458.4 L516.7,449.9 L528.3,442.9 L540.0,438.2 L545.0,436.7 L563.3,438.3 L576.7,438.3 L590.0,435.0 L603.3,436.7 L610.0,437.2 L618.9,439.4 L634.4,450.0 L644.4,460.0 L651.1,472.2 L661.1,472.2 L662.2,458.9 L664.4,448.9 L666.7,443.3 L677.8,447.8 L685.0,456.0 L689.0,468.0 L693.5,490.0 L706.0,477.0 L708.0,463.0 L710.4,452.0 L716.7,443.1 L732.7,428.9 L743.3,420.0 L748.7,411.1 L757.6,407.6 L771.8,406.7 L778.9,395.1 L793.1,388.0 L807.3,396.0 L814.4,393.3 L825.1,375.6 L842.9,357.8"/><path d="M502.4,0.7 L490.7,4.7 L470.7,12.6 L445.7,24.6 L420.7,36.8 L395.7,53.5 L370.7,69.0 L345.7,83.7 L325.7,98.1 L305.7,113.7 L285.7,127.5 L260.7,148.8 L250.5,155.4 L233.5,165.4 L216.7,171.7"/><path d="M664.4,448.9 L653.3,447.8 L636.7,434.4 L634.4,426.7 L655.6,417.8 L656.7,426.7 L666.7,433.3 L666.7,443.3"/><path d="M846.0,452.9 L838.0,450.2 L825.6,444.0 L820.2,445.8 L816.7,449.3 L817.6,455.6 L821.1,459.1 L825.6,468.0 L834.4,475.1 L845.1,487.6"/><path d="M587.5,0.0 L590.0,6.7 L588.3,13.3 L583.3,20.0 L578.3,26.7 L576.7,31.7 L577.3,48.7 L580.0,52.0 L580.7,57.3 L577.3,62.0 L573.3,68.0 L572.0,73.3 L572.7,78.7 L577.3,85.3 L583.3,94.7 L587.5,104.2 L598.3,103.3 L606.7,100.0 L615.0,98.3 L626.7,100.0 L635.0,103.3 L653.3,102.5 L661.7,98.3 L675.0,97.2 L679.4,95.6 L686.1,102.2 L690.6,108.9 L699.4,107.2 L707.2,106.7 L712.8,107.8 L717.2,110.6 L726.1,106.7 L735.0,100.6 L743.9,102.8 L752.8,107.8 L760.6,111.7 L767.2,105.6 L775.0,93.3 L783.3,66.7 L791.7,59.2 L803.3,60.0 L810.0,70.0 L820.0,71.7 L826.7,69.7 L837.1,73.3 L835.2,62.3 L826.7,51.3 L820.6,42.8 L804.7,35.5 L790.0,30.6 L786.7,29.2 L773.3,29.2 L760.0,34.2 L751.7,36.7 L755.0,20.0 L751.7,0.0"/><path d="M750.0,0.0 L763.3,6.7 L780.0,20.0 L795.0,13.3 L805.0,1.7 L808.3,0.0"/><path d="M786.7,0.0 L803.3,2.5 L810.8,0.0"/><path d="M0.0,49.0 L4.0,50.0 L9.0,55.0 L11.5,58.5 L13.0,62.0 L15.0,69.0 L15.5,74.0 L16.5,77.5 L22.0,80.0 L32.0,79.0 L42.0,80.0 L47.0,81.5 L51.0,84.0 L56.0,89.0 L57.0,94.0 L57.0,98.0 L54.0,104.0 L50.0,110.0 L46.0,116.0 L38.0,111.5 L30.0,107.0 L20.0,107.0 L12.0,112.0 L5.0,119.0 L0.0,126.0"/><path d="M0.0,690.0 L14.7,689.3 L24.0,701.3 L37.3,706.7 L50.7,708.7 L82.7,710.7 L108.0,720.0 L93.3,752.7 L80.0,749.3 L66.7,746.7 L56.0,746.7 L45.3,748.0 L33.3,752.0 L32.0,762.7 L20.0,772.0 L17.3,781.3 L20.0,790.7 L8.0,798.7 L0.0,796.0"/><path d="M704.0,657.0 L714.0,647.0 L732.0,644.0 L738.0,648.0 L743.0,664.0 L724.0,666.0 L704.0,657.0"/><path d="M495.0,886.7 L499.2,880.0 L498.3,871.7 L495.0,863.3 L493.3,850.0 L494.2,825.0 L496.7,811.7 L501.7,800.0 L508.3,783.3 L518.3,776.7 L525.0,770.0 L524.2,763.3 L520.8,758.3 L528.3,748.3 L538.3,738.3 L553.3,730.8 L571.7,728.3 L583.3,730.8 L598.3,736.7 L606.7,741.7 L610.0,753.3 L616.7,758.3 L625.0,761.7 L634.0,764.0 L636.0,772.0 L634.0,776.0 L648.0,778.0 L674.0,772.0 L696.0,752.0 L698.0,740.0 L714.0,734.0 L724.0,718.0 L738.0,694.0 L748.0,676.0 L757.3,668.7 L768.0,673.3 L770.7,684.0 L774.7,688.7 L784.0,685.3 L797.3,686.0 L806.7,682.0 L820.0,684.0 L833.3,683.3 L845.3,680.0"/></g>
<g fill="none" stroke="#ffa77a" stroke-width="1" shape-rendering="crispEdges">
<path d="M475.18,80.65 L478.32,80.89 L481.46,81.16 L484.60,81.45 L487.73,81.78 L490.87,82.13 L493.99,82.51 L497.12,82.92 L500.24,83.35 L503.36,83.82 L506.48,84.31 L509.59,84.83 L512.70,85.37 L515.80,85.95 L518.90,86.55 L521.99,87.18 L525.08,87.84 L528.17,88.53 L531.24,89.24 L534.32,89.98 L537.38,90.75 L540.44,91.54 L543.50,92.37 L546.54,93.22 L549.58,94.09 L552.62,95.00 L555.64,95.93 L558.66,96.89 L561.67,97.87 L564.68,98.88 L567.67,99.92 L570.66,100.99 L573.64,102.08 L576.61,103.20 L579.57,104.34 L582.52,105.51 L585.46,106.71 L588.39,107.93 L591.32,109.18 L594.23,110.46 L597.13,111.76 L600.02,113.09 L602.90,114.44 L605.77,115.82 L608.63,117.22 L611.48,118.65 L614.32,120.10 L617.14,121.58 L619.96,123.09 L622.76,124.62 L625.55,126.17 L628.32,127.75 L631.09,129.35 L633.84,130.98 L636.58,132.63 L639.30,134.31 L642.01,136.01 L644.71,137.73 L647.39,139.48 L650.06,141.25 L652.72,143.05 L655.36,144.87 L657.99,146.71 L660.60,148.57 L663.19,150.46 L665.78,152.37 L668.34,154.31 L670.89,156.26 L673.43,158.24 L675.94,160.24 L678.45,162.26 L680.93,164.31 L683.40,166.37 L685.85,168.46 L688.29,170.57 L690.71,172.70 L693.11,174.85 L695.49,177.02 L697.86,179.22 L700.21,181.43 L702.54,183.66 L704.85,185.92 L707.15,188.19 L709.42,190.49 L711.68,192.80 L713.92,195.14 L716.13,197.49 L718.33,199.86 L720.51,202.25 L722.67,204.66 L724.82,207.09 L726.94,209.54 L729.04,212.01 L731.12,214.49 L733.18,216.99 L735.22,219.51 L737.24,222.05 L739.24,224.61 L741.21,227.18 L743.17,229.77 L745.11,232.37 L747.02,234.99 L748.91,237.63 L750.78,240.29 L752.63,242.96 L754.46,245.65 L756.26,248.35 L758.04,251.06 L759.80,253.80 L761.54,256.54 L763.25,259.31 L764.94,262.08 L766.61,264.88 L768.25,267.68 L769.88,270.50 L771.47,273.33 L773.05,276.18 L774.60,279.04 L776.12,281.91 L777.63,284.80 L779.11,287.69 L780.56,290.60 L781.99,293.53 L783.40,296.46 L784.78,299.41 L786.13,302.36 L787.46,305.33 L788.77,308.31 L790.05,311.30 L791.31,314.30 L792.54,317.31 L793.75,320.34 L794.93,323.37 L796.08,326.41 L797.21,329.46 L798.31,332.52 L799.39,335.59 L800.44,338.66 L801.47,341.75 L802.46,344.84 L803.44,347.95 L804.38,351.05 L805.30,354.17 L806.20,357.30 L807.06,360.43 L807.90,363.57 L808.72,366.71 L809.50,369.86 L810.26,373.02 L811.00,376.18 L811.70,379.35 L812.38,382.53 L813.03,385.71 L813.65,388.89 L814.25,392.08 L814.82,395.27 L815.36,398.47 L815.88,401.67 L816.36,404.88 L816.82,408.09 L817.25,411.30 L817.66,414.51 L818.03,417.73 L818.38,420.95 L818.70,424.17 L818.99,427.40 L819.26,430.62 L819.49,433.85 L819.70,437.08 L819.88,440.31 L820.03,443.54 L820.15,446.77 L820.25,450.00 L820.32,453.23 L820.36,456.46 L820.37,459.69 L820.35,462.92 L820.30,466.15 L820.23,469.38 L820.13,472.60 L820.00,475.83 L819.84,479.05 L819.65,482.27 L819.43,485.49 L819.19,488.70 L818.92,491.91 L818.62,495.12 L818.29,498.33 L817.93,501.53 L817.55,504.73 L817.13,507.92 L816.69,511.11 L816.22,514.29 L815.72,517.47 L815.19,520.65 L814.64,523.82 L814.05,526.98 L813.44,530.14 L812.80,533.29 L812.14,536.43 L811.44,539.57 L810.72,542.70 L809.96,545.83 L809.18,548.95 L808.38,552.05 L807.54,555.16 L806.68,558.25 L805.79,561.34 L804.87,564.41 L803.92,567.48 L802.95,570.54 L801.95,573.59 L800.92,576.63 L799.86,579.66 L798.78,582.69 L797.67,585.70 L796.53,588.70 L795.36,591.69 L794.17,594.67 L792.95,597.64 L791.70,600.59 L790.43,603.54 L789.13,606.47 L787.80,609.40 L786.45,612.31 L785.07,615.20 L783.67,618.09 L782.23,620.96 L780.78,623.82 L779.29,626.67 L777.78,629.50 L776.24,632.32 L774.68,635.12 L773.09,637.92 L771.48,640.69 L769.84,643.46 L768.18,646.20 L766.49,648.94 L764.78,651.65 L763.04,654.35 L761.27,657.04 L759.48,659.71 L757.67,662.37 L755.83,665.01 L753.97,667.63 L752.09,670.23 L750.18,672.82 L748.24,675.39 L746.28,677.95 L744.30,680.49 L742.30,683.01 L740.27,685.51 L738.22,687.99 L736.14,690.46 L734.05,692.91 L731.93,695.34 L729.78,697.75 L727.62,700.14 L725.43,702.51 L723.22,704.86 L720.99,707.20 L718.74,709.51 L716.47,711.81 L714.17,714.08 L711.86,716.34 L709.52,718.57 L707.16,720.78 L704.78,722.98 L702.38,725.15 L699.96,727.30 L697.52,729.43 L695.06,731.54 L692.58,733.63 L690.08,735.69 L687.56,737.74 L685.03,739.76 L682.47,741.76 L679.90,743.74 L677.30,745.69 L674.69,747.63 L672.06,749.54 L669.41,751.43 L666.75,753.29 L664.06,755.13 L661.36,756.95 L658.65,758.75 L655.91,760.52 L653.16,762.27 L650.39,763.99 L647.61,765.69 L644.81,767.37 L641.99,769.02 L639.16,770.65 L636.31,772.25 L633.45,773.83 L630.58,775.38 L627.69,776.91 L624.78,778.42 L621.86,779.90 L618.93,781.35 L615.98,782.78 L613.02,784.18 L610.04,785.56 L607.06,786.91 L604.06,788.24 L601.05,789.54 L598.02,790.82 L594.98,792.07 L591.94,793.29 L588.88,794.49 L585.80,795.66 L582.72,796.80 L579.63,797.92 L576.53,799.01 L573.41,800.08 L570.29,801.12 L567.15,802.13 L564.01,803.11 L560.86,804.07 L557.70,805.00 L554.52,805.91 L551.35,806.78 L548.16,807.63 L544.96,808.46 L541.76,809.25 L538.55,810.02 L535.33,810.76 L532.11,811.47 L528.88,812.16 L525.64,812.82 L522.39,813.45 L519.14,814.05 L515.89,814.63 L512.63,815.17 L509.36,815.69 L506.09,816.18 L502.81,816.65 L499.53,817.08 L496.25,817.49 L492.96,817.87 L489.67,818.22 L486.38,818.55 L483.08,818.84 L479.78,819.11 L476.48,819.35 L473.17,819.56 L469.86,819.74 L466.56,819.90 L463.25,820.02 L459.94,820.12 L456.62,820.19 L453.31,820.24 L450.00,820.25 L446.69,820.24 L443.38,820.19 L440.06,820.12 L436.75,820.02 L433.44,819.90 L430.14,819.74 L426.83,819.56 L423.52,819.35 L420.22,819.11 L416.92,818.84 L413.62,818.55 L410.33,818.22 L407.04,817.87 L403.75,817.49 L400.47,817.08 L397.19,816.65 L393.91,816.18 L390.64,815.69 L387.37,815.17 L384.11,814.63 L380.86,814.05 L377.61,813.45 L374.36,812.82 L371.12,812.16 L367.89,811.47 L364.67,810.76 L361.45,810.02 L358.24,809.25 L355.04,808.46 L351.84,807.63 L348.65,806.78 L345.48,805.91 L342.30,805.00 L339.14,804.07 L335.99,803.11 L332.85,802.13 L329.71,801.12 L326.59,800.08 L323.47,799.01 L320.37,797.92 L317.28,796.80 L314.20,795.66 L311.12,794.49 L308.06,793.29 L305.02,792.07 L301.98,790.82 L298.95,789.54 L295.94,788.24 L292.94,786.91 L289.96,785.56 L286.98,784.18 L284.02,782.78 L281.07,781.35 L278.14,779.90 L275.22,778.42 L272.31,776.91 L269.42,775.38 L266.55,773.83 L263.69,772.25 L260.84,770.65 L258.01,769.02 L255.19,767.37 L252.39,765.69 L249.61,763.99 L246.84,762.27 L244.09,760.52 L241.35,758.75 L238.64,756.95 L235.94,755.13 L233.25,753.29 L230.59,751.43 L227.94,749.54 L225.31,747.63 L222.70,745.69 L220.10,743.74 L217.53,741.76 L214.97,739.76 L212.44,737.74 L209.92,735.69 L207.42,733.63 L204.94,731.54 L202.48,729.43 L200.04,727.30 L197.62,725.15 L195.22,722.98 L192.84,720.78 L190.48,718.57 L188.14,716.34 L185.83,714.08 L183.53,711.81 L181.26,709.51 L179.01,707.20 L176.78,704.86 L174.57,702.51 L172.38,700.14 L170.22,697.75 L168.07,695.34 L165.95,692.91 L163.86,690.46 L161.78,687.99 L159.73,685.51 L157.70,683.01 L155.70,680.49 L153.72,677.95 L151.76,675.39 L149.82,672.82 L147.91,670.23 L146.03,667.63 L144.17,665.01 L142.33,662.37 L140.52,659.71 L138.73,657.04 L136.96,654.35 L135.22,651.65 L133.51,648.94 L131.82,646.20 L130.16,643.46 L128.52,640.69 L126.91,637.92 L125.32,635.13 L123.76,632.32 L122.22,629.50 L120.71,626.67 L119.22,623.82 L117.77,620.96 L116.33,618.09 L114.93,615.20 L113.55,612.31 L112.20,609.40 L110.87,606.47 L109.57,603.54 L108.30,600.59 L107.05,597.64 L105.83,594.67 L104.64,591.69 L103.47,588.70 L102.33,585.70 L101.22,582.69 L100.14,579.66 L99.08,576.63 L98.05,573.59 L97.05,570.54 L96.08,567.48 L95.13,564.41 L94.21,561.34 L93.32,558.25 L92.46,555.16 L91.62,552.05 L90.82,548.95 L90.04,545.83 L89.28,542.70 L88.56,539.57 L87.86,536.43 L87.20,533.29 L86.56,530.14 L85.95,526.98 L85.36,523.82 L84.81,520.65 L84.28,517.47 L83.78,514.29 L83.31,511.11 L82.87,507.92 L82.45,504.73 L82.07,501.53 L81.71,498.33 L81.38,495.12 L81.08,491.91 L80.81,488.70 L80.57,485.49 L80.35,482.27 L80.16,479.05 L80.00,475.83 L79.87,472.60 L79.77,469.38 L79.70,466.15 L79.65,462.92 L79.63,459.69 L79.64,456.46 L79.68,453.23 L79.75,450.00 L79.85,446.77 L79.97,443.54 L80.12,440.31 L80.30,437.08 L80.51,433.85 L80.74,430.62 L81.01,427.40 L81.30,424.17 L81.62,420.95 L81.97,417.73 L82.34,414.51 L82.75,411.30 L83.18,408.09 L83.64,404.88 L84.12,401.67 L84.64,398.47 L85.18,395.27 L85.75,392.08 L86.35,388.89 L86.97,385.71 L87.62,382.53 L88.30,379.35 L89.00,376.18 L89.74,373.02 L90.50,369.86 L91.28,366.71 L92.10,363.57 L92.94,360.43 L93.80,357.30 L94.70,354.17 L95.62,351.05 L96.56,347.95 L97.54,344.84 L98.53,341.75 L99.56,338.66 L100.61,335.59 L101.69,332.52 L102.79,329.46 L103.92,326.41 L105.07,323.37 L106.25,320.34 L107.46,317.31 L108.69,314.30 L109.95,311.30 L111.23,308.31 L112.54,305.33 L113.87,302.36 L115.22,299.41 L116.60,296.46 L118.01,293.53 L119.44,290.60 L120.89,287.69 L122.37,284.80 L123.88,281.91 L125.40,279.04 L126.95,276.18 L128.53,273.33 L130.12,270.50 L131.75,267.68 L133.39,264.88 L135.06,262.08 L136.75,259.31 L138.46,256.54 L140.20,253.80 L141.96,251.06 L143.74,248.35 L145.54,245.65 L147.37,242.96 L149.22,240.29 L151.09,237.63 L152.98,234.99 L154.89,232.37 L156.83,229.77 L158.79,227.18 L160.76,224.61 L162.76,222.05 L164.78,219.51 L166.82,216.99 L168.88,214.49 L170.96,212.01 L173.06,209.54 L175.18,207.09 L177.33,204.66 L179.49,202.25 L181.67,199.86 L183.87,197.49 L186.08,195.14 L188.32,192.80 L190.58,190.49 L192.85,188.19 L195.15,185.92 L197.46,183.66 L199.79,181.43 L202.14,179.22 L204.51,177.02 L206.89,174.85 L209.29,172.70 L211.71,170.57 L214.15,168.46 L216.60,166.37 L219.07,164.31 L221.55,162.26 L224.06,160.24 L226.57,158.24 L229.11,156.26 L231.66,154.31 L234.22,152.37 L236.81,150.46 L239.40,148.57 L242.01,146.71 L244.64,144.87 L247.28,143.05 L249.94,141.25 L252.61,139.48 L255.29,137.73 L257.99,136.01 L260.70,134.31 L263.42,132.63 L266.16,130.98 L268.91,129.35 L271.68,127.75 L274.45,126.17 L277.24,124.62 L280.04,123.09 L282.86,121.58 L285.68,120.10 L288.52,118.65 L291.37,117.22 L294.23,115.82 L297.10,114.44 L299.98,113.09 L302.87,111.76 L305.77,110.46 L308.68,109.18 L311.61,107.93 L314.54,106.71 L317.48,105.51 L320.43,104.34 L323.39,103.20 L326.36,102.08 L329.34,100.99 L332.33,99.92 L335.32,98.88 L338.33,97.87 L341.34,96.89 L344.36,95.93 L347.38,95.00 L350.42,94.09 L353.46,93.22 L356.50,92.37 L359.56,91.54 L362.62,90.75 L365.68,89.98 L368.76,89.24 L371.83,88.53 L374.92,87.84 L378.01,87.18 L381.10,86.55 L384.20,85.95 L387.30,85.37 L390.41,84.83 L393.52,84.31 L396.64,83.82 L399.76,83.35 L402.88,82.92 L406.01,82.51 L409.13,82.13 L412.27,81.78 L415.40,81.45 L418.54,81.16 L421.68,80.89 L424.82,80.65"/>
<path d="M472.29,265.98 L475.45,266.40 L478.61,266.88 L481.76,267.41 L484.90,268.00 L488.03,268.65 L491.15,269.35 L494.26,270.10 L497.35,270.91 L500.43,271.77 L503.50,272.69 L506.54,273.66 L509.58,274.69 L512.59,275.77 L515.59,276.90 L518.57,278.09 L521.52,279.32 L524.46,280.61 L527.38,281.95 L530.27,283.34 L533.14,284.79 L535.98,286.28 L538.80,287.82 L541.59,289.41 L544.36,291.05 L547.09,292.74 L549.80,294.48 L552.48,296.26 L555.13,298.09 L557.75,299.97 L560.34,301.89 L562.89,303.86 L565.41,305.87 L567.90,307.93 L570.35,310.03 L572.76,312.17 L575.14,314.35 L577.49,316.58 L579.79,318.84 L582.06,321.15 L584.28,323.49 L586.47,325.88 L588.62,328.30 L590.72,330.76 L592.79,333.25 L594.81,335.78 L596.79,338.34 L598.72,340.94 L600.61,343.57 L602.46,346.24 L604.26,348.93 L606.01,351.66 L607.72,354.41 L609.38,357.20 L610.99,360.01 L612.56,362.85 L614.07,365.72 L615.54,368.61 L616.95,371.53 L618.32,374.47 L619.64,377.44 L620.90,380.42 L622.12,383.43 L623.28,386.46 L624.39,389.50 L625.45,392.57 L626.46,395.65 L627.41,398.75 L628.31,401.87 L629.15,405.00 L629.94,408.14 L630.68,411.29 L631.36,414.46 L631.99,417.64 L632.56,420.83 L633.08,424.03 L633.54,427.23 L633.94,430.44 L634.29,433.66 L634.59,436.88 L634.82,440.11 L635.01,443.34 L635.13,446.57 L635.20,449.80 L635.21,453.03 L635.17,456.26 L635.07,459.49 L634.91,462.72 L634.70,465.94 L634.43,469.16 L634.10,472.37 L633.72,475.57 L633.28,478.77 L632.79,481.96 L632.23,485.14 L631.63,488.31 L630.96,491.46 L630.25,494.60 L629.47,497.73 L628.64,500.85 L627.76,503.95 L626.82,507.03 L625.83,510.10 L624.78,513.14 L623.68,516.17 L622.52,519.18 L621.32,522.16 L620.06,525.13 L618.74,528.07 L617.38,530.99 L615.96,533.88 L614.49,536.75 L612.97,539.59 L611.40,542.40 L609.78,545.19 L608.11,547.94 L606.39,550.67 L604.62,553.36 L602.80,556.03 L600.94,558.66 L599.03,561.26 L597.07,563.82 L595.07,566.35 L593.02,568.84 L590.93,571.30 L588.79,573.72 L586.61,576.11 L584.39,578.45 L582.12,580.76 L579.82,583.02 L577.47,585.25 L575.08,587.43 L572.66,589.57 L570.19,591.67 L567.69,593.73 L565.15,595.74 L562.58,597.71 L559.97,599.63 L557.32,601.51 L554.64,603.34 L551.93,605.12 L549.19,606.86 L546.41,608.55 L543.61,610.19 L540.78,611.78 L537.91,613.32 L535.02,614.81 L532.11,616.26 L529.16,617.65 L526.19,618.99 L523.20,620.28 L520.19,621.51 L517.15,622.70 L514.09,623.83 L511.01,624.91 L507.92,625.94 L504.80,626.91 L501.67,627.83 L498.52,628.69 L495.35,629.50 L492.17,630.25 L488.98,630.95 L485.77,631.60 L482.56,632.19 L479.33,632.72 L476.10,633.20 L472.85,633.62 L469.60,633.99 L466.34,634.30 L463.08,634.55 L459.81,634.75 L456.54,634.89 L453.27,634.97 L450.00,635.00 L446.73,634.97 L443.46,634.89 L440.19,634.75 L436.92,634.55 L433.66,634.30 L430.40,633.99 L427.15,633.62 L423.90,633.20 L420.67,632.72 L417.44,632.19 L414.23,631.60 L411.02,630.95 L407.83,630.25 L404.65,629.50 L401.48,628.69 L398.33,627.83 L395.20,626.91 L392.08,625.94 L388.99,624.91 L385.91,623.83 L382.85,622.70 L379.81,621.51 L376.80,620.28 L373.81,618.99 L370.84,617.65 L367.89,616.26 L364.98,614.81 L362.09,613.32 L359.22,611.78 L356.39,610.19 L353.59,608.55 L350.81,606.86 L348.07,605.12 L345.36,603.34 L342.68,601.51 L340.03,599.63 L337.42,597.71 L334.85,595.74 L332.31,593.73 L329.81,591.67 L327.34,589.57 L324.92,587.43 L322.53,585.25 L320.18,583.02 L317.88,580.76 L315.61,578.45 L313.39,576.11 L311.21,573.72 L309.07,571.30 L306.98,568.84 L304.93,566.35 L302.93,563.82 L300.97,561.26 L299.06,558.66 L297.20,556.03 L295.38,553.36 L293.61,550.67 L291.89,547.94 L290.22,545.19 L288.60,542.40 L287.03,539.59 L285.51,536.75 L284.04,533.88 L282.62,530.99 L281.26,528.07 L279.94,525.13 L278.68,522.16 L277.48,519.18 L276.32,516.17 L275.22,513.14 L274.17,510.10 L273.18,507.03 L272.24,503.95 L271.36,500.85 L270.53,497.73 L269.75,494.60 L269.04,491.46 L268.37,488.31 L267.77,485.14 L267.21,481.96 L266.72,478.77 L266.28,475.57 L265.90,472.37 L265.57,469.16 L265.30,465.94 L265.09,462.72 L264.93,459.49 L264.83,456.26 L264.79,453.03 L264.80,449.80 L264.87,446.57 L264.99,443.34 L265.18,440.11 L265.41,436.88 L265.71,433.66 L266.06,430.44 L266.46,427.23 L266.92,424.03 L267.44,420.83 L268.01,417.64 L268.64,414.46 L269.32,411.29 L270.06,408.14 L270.85,405.00 L271.69,401.87 L272.59,398.75 L273.54,395.65 L274.55,392.57 L275.61,389.50 L276.72,386.46 L277.88,383.43 L279.10,380.42 L280.36,377.44 L281.68,374.47 L283.05,371.53 L284.46,368.61 L285.93,365.72 L287.44,362.85 L289.01,360.01 L290.62,357.20 L292.28,354.41 L293.99,351.66 L295.74,348.93 L297.54,346.24 L299.39,343.57 L301.28,340.94 L303.21,338.34 L305.19,335.78 L307.21,333.25 L309.28,330.76 L311.38,328.30 L313.53,325.88 L315.72,323.49 L317.94,321.15 L320.21,318.84 L322.51,316.58 L324.86,314.35 L327.24,312.17 L329.65,310.03 L332.10,307.93 L334.59,305.87 L337.11,303.86 L339.66,301.89 L342.25,299.97 L344.87,298.09 L347.52,296.26 L350.20,294.48 L352.91,292.74 L355.64,291.05 L358.41,289.41 L361.20,287.82 L364.02,286.28 L366.86,284.79 L369.73,283.34 L372.62,281.95 L375.54,280.61 L378.48,279.32 L381.43,278.09 L384.41,276.90 L387.41,275.77 L390.42,274.69 L393.46,273.66 L396.50,272.69 L399.57,271.77 L402.65,270.91 L405.74,270.10 L408.85,269.35 L411.97,268.65 L415.10,268.00 L418.24,267.41 L421.39,266.88 L424.55,266.40 L427.71,265.98"/>
</g>
<g font-family="Liberation Sans, sans-serif" font-weight="bold" font-style="italic" font-size="10.5" fill="#ffff00">
<text x="428.5" y="82.6" textLength="42.5" lengthAdjust="spacingAndGlyphs">100 NMI</text>
<text x="431" y="267.6" textLength="37" lengthAdjust="spacingAndGlyphs">50 NMI</text>
</g>
<g shape-rendering="crispEdges">
<rect x="873.5" y="87.5" width="20" height="713.5" fill="none" stroke="#880088" stroke-width="1"/>
<rect x="875" y="89" width="17" height="5" fill="#800080"/><rect x="875" y="94" width="17" height="6" fill="#801888"/><rect x="875" y="100" width="17" height="6" fill="#8a2890"/><rect x="875" y="106" width="17" height="6" fill="#9a48a0"/><rect x="875" y="112" width="17" height="6" fill="#a868b0"/><rect x="875" y="118" width="17" height="6" fill="#c090c8"/><rect x="875" y="124" width="17" height="6" fill="#d8b8d8"/><rect x="875" y="130" width="17" height="4" fill="#e8d8e8"/><rect x="875" y="134" width="17" height="5" fill="#f8eef8"/><rect x="875" y="139" width="17" height="5" fill="#fcf8fc"/><rect x="875" y="144" width="17" height="11" fill="#ffffff"/><rect x="875" y="155" width="17" height="7" fill="#fff4f8"/><rect x="875" y="162" width="17" height="6" fill="#ffe8f0"/><rect x="875" y="168" width="17" height="6" fill="#ffd8e8"/><rect x="875" y="174" width="17" height="5" fill="#ffc0dc"/><rect x="875" y="179" width="17" height="4" fill="#f8a8cc"/><rect x="875" y="183" width="17" height="6" fill="#f898c4"/><rect x="875" y="189" width="17" height="6" fill="#f088bc"/><rect x="875" y="195" width="17" height="6" fill="#f080b0"/><rect x="875" y="201" width="17" height="6" fill="#e870a0"/><rect x="875" y="207" width="17" height="6" fill="#e06090"/><rect x="875" y="213" width="17" height="6" fill="#d85078"/><rect x="875" y="219" width="17" height="4" fill="#d04060"/><rect x="875" y="223" width="17" height="4" fill="#c83048"/><rect x="875" y="227" width="17" height="6" fill="#c02030"/><rect x="875" y="233" width="17" height="6" fill="#b81018"/><rect x="875" y="239" width="17" height="6" fill="#b00808"/><rect x="875" y="245" width="17" height="12" fill="#b00000"/><rect x="875" y="257" width="17" height="31" fill="#d00000"/><rect x="875" y="288" width="17" height="6" fill="#d81010"/><rect x="875" y="294" width="17" height="7" fill="#e02018"/><rect x="875" y="301" width="17" height="6" fill="#e03020"/><rect x="875" y="307" width="17" height="5" fill="#e84828"/><rect x="875" y="312" width="17" height="4" fill="#f06030"/><rect x="875" y="316" width="17" height="6" fill="#f07838"/><rect x="875" y="322" width="17" height="6" fill="#f89848"/><rect x="875" y="328" width="17" height="6" fill="#f8b050"/><rect x="875" y="334" width="17" height="6" fill="#f0c050"/><rect x="875" y="340" width="17" height="6" fill="#e8d058"/><rect x="875" y="346" width="17" height="6" fill="#d8e058"/><rect x="875" y="352" width="17" height="4" fill="#c0e060"/><rect x="875" y="356" width="17" height="5" fill="#a8e060"/><rect x="875" y="361" width="17" height="8" fill="#90e068"/><rect x="875" y="369" width="17" height="9" fill="#68e078"/><rect x="875" y="378" width="17" height="6" fill="#50e090"/><rect x="875" y="384" width="17" height="6" fill="#48e0a0"/><rect x="875" y="390" width="17" height="6" fill="#40d8b0"/><rect x="875" y="396" width="17" height="6" fill="#38c8c0"/><rect x="875" y="402" width="17" height="6" fill="#38b0c8"/><rect x="875" y="408" width="17" height="7" fill="#3098c8"/><rect x="875" y="415" width="17" height="7" fill="#3080c0"/><rect x="875" y="422" width="17" height="6" fill="#3868b8"/><rect x="875" y="428" width="17" height="6" fill="#4858b0"/><rect x="875" y="434" width="17" height="6" fill="#5850a8"/><rect x="875" y="440" width="17" height="6" fill="#7060b0"/><rect x="875" y="446" width="17" height="1" fill="rgb(200,200,200)"/><rect x="875" y="447" width="17" height="1" fill="rgb(199,199,199)"/><rect x="875" y="448" width="17" height="1" fill="rgb(198,198,198)"/><rect x="875" y="449" width="17" height="1" fill="rgb(197,197,197)"/><rect x="875" y="450" width="17" height="1" fill="rgb(196,196,196)"/><rect x="875" y="451" width="17" height="1" fill="rgb(195,195,195)"/><rect x="875" y="452" width="17" height="1" fill="rgb(194,194,194)"/><rect x="875" y="453" width="17" height="1" fill="rgb(193,193,193)"/><rect x="875" y="454" width="17" height="1" fill="rgb(192,192,192)"/><rect x="875" y="455" width="17" height="1" fill="rgb(191,191,191)"/><rect x="875" y="456" width="17" height="1" fill="rgb(190,190,190)"/><rect x="875" y="457" width="17" height="1" fill="rgb(189,189,189)"/><rect x="875" y="458" width="17" height="1" fill="rgb(188,188,188)"/><rect x="875" y="459" width="17" height="1" fill="rgb(187,187,187)"/><rect x="875" y="460" width="17" height="1" fill="rgb(186,186,186)"/><rect x="875" y="461" width="17" height="1" fill="rgb(185,185,185)"/><rect x="875" y="462" width="17" height="1" fill="rgb(184,184,184)"/><rect x="875" y="463" width="17" height="1" fill="rgb(183,183,183)"/><rect x="875" y="464" width="17" height="1" fill="rgb(182,182,182)"/><rect x="875" y="465" width="17" height="1" fill="rgb(181,181,181)"/><rect x="875" y="466" width="17" height="1" fill="rgb(180,180,180)"/><rect x="875" y="467" width="17" height="1" fill="rgb(179,179,179)"/><rect x="875" y="468" width="17" height="1" fill="rgb(178,178,178)"/><rect x="875" y="469" width="17" height="1" fill="rgb(177,177,177)"/><rect x="875" y="470" width="17" height="1" fill="rgb(176,176,176)"/><rect x="875" y="471" width="17" height="1" fill="rgb(175,175,175)"/><rect x="875" y="472" width="17" height="1" fill="rgb(175,175,175)"/><rect x="875" y="473" width="17" height="1" fill="rgb(174,174,174)"/><rect x="875" y="474" width="17" height="1" fill="rgb(173,173,173)"/><rect x="875" y="475" width="17" height="1" fill="rgb(172,172,172)"/><rect x="875" y="476" width="17" height="1" fill="rgb(171,171,171)"/><rect x="875" y="477" width="17" height="1" fill="rgb(170,170,170)"/><rect x="875" y="478" width="17" height="1" fill="rgb(169,169,169)"/><rect x="875" y="479" width="17" height="1" fill="rgb(168,168,168)"/><rect x="875" y="480" width="17" height="1" fill="rgb(167,167,167)"/><rect x="875" y="481" width="17" height="1" fill="rgb(166,166,166)"/><rect x="875" y="482" width="17" height="1" fill="rgb(165,165,165)"/><rect x="875" y="483" width="17" height="1" fill="rgb(164,164,164)"/><rect x="875" y="484" width="17" height="1" fill="rgb(163,163,163)"/><rect x="875" y="485" width="17" height="1" fill="rgb(162,162,162)"/><rect x="875" y="486" width="17" height="1" fill="rgb(161,161,161)"/><rect x="875" y="487" width="17" height="1" fill="rgb(160,160,160)"/><rect x="875" y="488" width="17" height="1" fill="rgb(159,159,159)"/><rect x="875" y="489" width="17" height="1" fill="rgb(158,158,158)"/><rect x="875" y="490" width="17" height="1" fill="rgb(157,157,157)"/><rect x="875" y="491" width="17" height="1" fill="rgb(156,156,156)"/><rect x="875" y="492" width="17" height="1" fill="rgb(155,155,155)"/><rect x="875" y="493" width="17" height="1" fill="rgb(154,154,154)"/><rect x="875" y="494" width="17" height="1" fill="rgb(153,153,153)"/><rect x="875" y="495" width="17" height="1" fill="rgb(152,152,152)"/><rect x="875" y="496" width="17" height="1" fill="rgb(151,151,151)"/><rect x="875" y="497" width="17" height="1" fill="rgb(150,150,150)"/><rect x="875" y="498" width="17" height="1" fill="rgb(149,149,149)"/><rect x="875" y="499" width="17" height="1" fill="rgb(148,148,148)"/><rect x="875" y="500" width="17" height="1" fill="rgb(147,147,147)"/><rect x="875" y="501" width="17" height="1" fill="rgb(146,146,146)"/><rect x="875" y="502" width="17" height="1" fill="rgb(145,145,145)"/><rect x="875" y="503" width="17" height="1" fill="rgb(144,144,144)"/><rect x="875" y="504" width="17" height="1" fill="rgb(143,143,143)"/><rect x="875" y="505" width="17" height="1" fill="rgb(142,142,142)"/><rect x="875" y="506" width="17" height="1" fill="rgb(141,141,141)"/><rect x="875" y="507" width="17" height="1" fill="rgb(140,140,140)"/><rect x="875" y="508" width="17" height="1" fill="rgb(139,139,139)"/><rect x="875" y="509" width="17" height="1" fill="rgb(138,138,138)"/><rect x="875" y="510" width="17" height="1" fill="rgb(137,137,137)"/><rect x="875" y="511" width="17" height="1" fill="rgb(136,136,136)"/><rect x="875" y="512" width="17" height="1" fill="rgb(135,135,135)"/><rect x="875" y="513" width="17" height="1" fill="rgb(134,134,134)"/><rect x="875" y="514" width="17" height="1" fill="rgb(133,133,133)"/><rect x="875" y="515" width="17" height="1" fill="rgb(132,132,132)"/><rect x="875" y="516" width="17" height="1" fill="rgb(131,131,131)"/><rect x="875" y="517" width="17" height="1" fill="rgb(130,130,130)"/><rect x="875" y="518" width="17" height="1" fill="rgb(129,129,129)"/><rect x="875" y="519" width="17" height="1" fill="rgb(128,128,128)"/><rect x="875" y="520" width="17" height="1" fill="rgb(127,127,127)"/><rect x="875" y="521" width="17" height="1" fill="rgb(126,126,126)"/><rect x="875" y="522" width="17" height="1" fill="rgb(125,125,125)"/><rect x="875" y="523" width="17" height="1" fill="rgb(125,125,125)"/><rect x="875" y="524" width="17" height="1" fill="rgb(124,124,124)"/><rect x="875" y="525" width="17" height="1" fill="rgb(123,123,123)"/><rect x="875" y="526" width="17" height="1" fill="rgb(122,122,122)"/><rect x="875" y="527" width="17" height="1" fill="rgb(121,121,121)"/><rect x="875" y="528" width="17" height="1" fill="rgb(120,120,120)"/><rect x="875" y="529" width="17" height="1" fill="rgb(119,119,119)"/><rect x="875" y="530" width="17" height="1" fill="rgb(118,118,118)"/><rect x="875" y="531" width="17" height="1" fill="rgb(117,117,117)"/><rect x="875" y="532" width="17" height="1" fill="rgb(116,116,116)"/><rect x="875" y="533" width="17" height="1" fill="rgb(115,115,115)"/><rect x="875" y="534" width="17" height="1" fill="rgb(114,114,114)"/><rect x="875" y="535" width="17" height="1" fill="rgb(113,113,113)"/><rect x="875" y="536" width="17" height="1" fill="rgb(112,112,112)"/><rect x="875" y="537" width="17" height="1" fill="rgb(111,111,111)"/><rect x="875" y="538" width="17" height="1" fill="rgb(110,110,110)"/><rect x="875" y="539" width="17" height="1" fill="rgb(109,109,109)"/><rect x="875" y="540" width="17" height="1" fill="rgb(108,108,108)"/><rect x="875" y="541" width="17" height="1" fill="rgb(107,107,107)"/><rect x="875" y="542" width="17" height="1" fill="rgb(106,106,106)"/><rect x="875" y="543" width="17" height="1" fill="rgb(105,105,105)"/><rect x="875" y="544" width="17" height="1" fill="rgb(104,104,104)"/><rect x="875" y="545" width="17" height="1" fill="rgb(103,103,103)"/><rect x="875" y="546" width="17" height="1" fill="rgb(102,102,102)"/><rect x="875" y="547" width="17" height="1" fill="rgb(101,101,101)"/><rect x="875" y="548" width="17" height="1" fill="rgb(100,100,100)"/><rect x="875" y="549" width="17" height="1" fill="rgb(99,99,99)"/><rect x="875" y="550" width="17" height="1" fill="rgb(98,98,98)"/><rect x="875" y="551" width="17" height="1" fill="rgb(97,97,97)"/><rect x="875" y="552" width="17" height="1" fill="rgb(96,96,96)"/><rect x="875" y="553" width="17" height="1" fill="rgb(95,95,95)"/><rect x="875" y="554" width="17" height="1" fill="rgb(94,94,94)"/><rect x="875" y="555" width="17" height="1" fill="rgb(93,93,93)"/><rect x="875" y="556" width="17" height="1" fill="rgb(92,92,92)"/><rect x="875" y="557" width="17" height="1" fill="rgb(91,91,91)"/><rect x="875" y="558" width="17" height="1" fill="rgb(90,90,90)"/><rect x="875" y="559" width="17" height="1" fill="rgb(89,89,89)"/><rect x="875" y="560" width="17" height="1" fill="rgb(88,88,88)"/><rect x="875" y="561" width="17" height="1" fill="rgb(87,87,87)"/><rect x="875" y="562" width="17" height="1" fill="rgb(86,86,86)"/><rect x="875" y="563" width="17" height="1" fill="rgb(85,85,85)"/><rect x="875" y="564" width="17" height="1" fill="rgb(84,84,84)"/><rect x="875" y="565" width="17" height="1" fill="rgb(83,83,83)"/><rect x="875" y="566" width="17" height="1" fill="rgb(82,82,82)"/><rect x="875" y="567" width="17" height="1" fill="rgb(81,81,81)"/><rect x="875" y="568" width="17" height="1" fill="rgb(80,80,80)"/><rect x="875" y="569" width="17" height="1" fill="rgb(79,79,79)"/><rect x="875" y="570" width="17" height="1" fill="rgb(78,78,78)"/><rect x="875" y="571" width="17" height="1" fill="rgb(77,77,77)"/><rect x="875" y="572" width="17" height="1" fill="rgb(76,76,76)"/><rect x="875" y="573" width="17" height="1" fill="rgb(75,75,75)"/><rect x="875" y="574" width="17" height="1" fill="rgb(75,75,75)"/><rect x="875" y="575" width="17" height="1" fill="rgb(74,74,74)"/><rect x="875" y="576" width="17" height="1" fill="rgb(73,73,73)"/><rect x="875" y="577" width="17" height="1" fill="rgb(72,72,72)"/><rect x="875" y="578" width="17" height="1" fill="rgb(71,71,71)"/><rect x="875" y="579" width="17" height="1" fill="rgb(70,70,70)"/><rect x="875" y="580" width="17" height="1" fill="rgb(69,69,69)"/><rect x="875" y="581" width="17" height="1" fill="rgb(68,68,68)"/><rect x="875" y="582" width="17" height="1" fill="rgb(67,67,67)"/><rect x="875" y="583" width="17" height="1" fill="rgb(66,66,66)"/><rect x="875" y="584" width="17" height="1" fill="rgb(65,65,65)"/><rect x="875" y="585" width="17" height="1" fill="rgb(64,64,64)"/><rect x="875" y="586" width="17" height="1" fill="rgb(63,63,63)"/><rect x="875" y="587" width="17" height="1" fill="rgb(62,62,62)"/><rect x="875" y="588" width="17" height="1" fill="rgb(61,61,61)"/><rect x="875" y="589" width="17" height="1" fill="rgb(60,60,60)"/><rect x="875" y="590" width="17" height="1" fill="rgb(59,59,59)"/><rect x="875" y="591" width="17" height="1" fill="rgb(58,58,58)"/><rect x="875" y="592" width="17" height="1" fill="rgb(57,57,57)"/><rect x="875" y="593" width="17" height="1" fill="rgb(56,56,56)"/><rect x="875" y="594" width="17" height="1" fill="rgb(55,55,55)"/><rect x="875" y="595" width="17" height="1" fill="rgb(54,54,54)"/><rect x="875" y="596" width="17" height="1" fill="rgb(53,53,53)"/><rect x="875" y="597" width="17" height="1" fill="rgb(52,52,52)"/><rect x="875" y="598" width="17" height="1" fill="rgb(51,51,51)"/><rect x="875" y="599" width="17" height="1" fill="rgb(50,50,50)"/><rect x="875" y="600" width="17" height="1" fill="rgb(49,49,49)"/><rect x="875" y="601" width="17" height="1" fill="rgb(48,48,48)"/><rect x="875" y="602" width="17" height="1" fill="rgb(47,47,47)"/><rect x="875" y="603" width="17" height="1" fill="rgb(46,46,46)"/><rect x="875" y="604" width="17" height="1" fill="rgb(45,45,45)"/><rect x="875" y="605" width="17" height="1" fill="rgb(44,44,44)"/><rect x="875" y="606" width="17" height="1" fill="rgb(43,43,43)"/><rect x="875" y="607" width="17" height="1" fill="rgb(42,42,42)"/><rect x="875" y="608" width="17" height="1" fill="rgb(41,41,41)"/><rect x="875" y="609" width="17" height="1" fill="rgb(40,40,40)"/><rect x="875" y="610" width="17" height="1" fill="rgb(39,39,39)"/><rect x="875" y="611" width="17" height="1" fill="rgb(38,38,38)"/><rect x="875" y="612" width="17" height="1" fill="rgb(37,37,37)"/><rect x="875" y="613" width="17" height="1" fill="rgb(36,36,36)"/><rect x="875" y="614" width="17" height="1" fill="rgb(35,35,35)"/><rect x="875" y="615" width="17" height="1" fill="rgb(34,34,34)"/><rect x="875" y="616" width="17" height="1" fill="rgb(33,33,33)"/><rect x="875" y="617" width="17" height="1" fill="rgb(32,32,32)"/><rect x="875" y="618" width="17" height="1" fill="rgb(31,31,31)"/><rect x="875" y="619" width="17" height="1" fill="rgb(30,30,30)"/><rect x="875" y="620" width="17" height="1" fill="rgb(29,29,29)"/><rect x="875" y="621" width="17" height="1" fill="rgb(28,28,28)"/><rect x="875" y="622" width="17" height="1" fill="rgb(27,27,27)"/><rect x="875" y="623" width="17" height="1" fill="rgb(26,26,26)"/><rect x="875" y="624" width="17" height="1" fill="rgb(25,25,25)"/><rect x="875" y="625" width="17" height="1" fill="rgb(25,25,25)"/><rect x="875" y="626" width="17" height="1" fill="rgb(24,24,24)"/><rect x="875" y="627" width="17" height="1" fill="rgb(23,23,23)"/><rect x="875" y="628" width="17" height="1" fill="rgb(22,22,22)"/><rect x="875" y="629" width="17" height="1" fill="rgb(21,21,21)"/><rect x="875" y="630" width="17" height="1" fill="rgb(20,20,20)"/><rect x="875" y="631" width="17" height="1" fill="rgb(19,19,19)"/><rect x="875" y="632" width="17" height="1" fill="rgb(18,18,18)"/><rect x="875" y="633" width="17" height="1" fill="rgb(17,17,17)"/><rect x="875" y="634" width="17" height="1" fill="rgb(16,16,16)"/><rect x="875" y="635" width="17" height="1" fill="rgb(15,15,15)"/><rect x="875" y="636" width="17" height="1" fill="rgb(14,14,14)"/><rect x="875" y="637" width="17" height="1" fill="rgb(13,13,13)"/><rect x="875" y="638" width="17" height="1" fill="rgb(12,12,12)"/><rect x="875" y="639" width="17" height="1" fill="rgb(11,11,11)"/><rect x="875" y="640" width="17" height="1" fill="rgb(10,10,10)"/><rect x="875" y="641" width="17" height="1" fill="rgb(9,9,9)"/><rect x="875" y="642" width="17" height="1" fill="rgb(8,8,8)"/><rect x="875" y="643" width="17" height="1" fill="rgb(7,7,7)"/><rect x="875" y="644" width="17" height="1" fill="rgb(6,6,6)"/><rect x="875" y="645" width="17" height="1" fill="rgb(5,5,5)"/><rect x="875" y="646" width="17" height="1" fill="rgb(4,4,4)"/><rect x="875" y="647" width="17" height="1" fill="rgb(3,3,3)"/><rect x="875" y="648" width="17" height="1" fill="rgb(2,2,2)"/><rect x="875" y="649" width="17" height="1" fill="rgb(1,1,1)"/>
</g>
<g fill="none" stroke="#ffff00" stroke-width="1" shape-rendering="crispEdges" stroke-linecap="square">
<path d="M860.5,108.5 L865.5,108.5 L865.5,109.5 L862.5,116.5  M864.5,152.5 L861.5,152.5 L860.5,153.5 L860.5,159.5 L861.5,160.5 L864.5,160.5 L865.5,159.5 L865.5,157.5 L864.5,156.5 L860.5,156.5  M865.5,197.5 L860.5,197.5 L860.5,201.5 L864.5,201.5 L865.5,202.5 L865.5,204.5 L864.5,205.5 L861.5,205.5 L860.5,204.5  M864.5,249.5 L864.5,241.5 L860.5,246.5 L865.5,246.5  M860.5,287.5 L861.5,286.5 L864.5,286.5 L865.5,287.5 L865.5,289.5 L864.5,290.5 L861.5,290.5  M864.5,290.5 L865.5,291.5 L865.5,293.5 L864.5,294.5 L861.5,294.5 L860.5,293.5  M860.5,331.5 L861.5,330.5 L864.5,330.5 L865.5,331.5 L865.5,333.5 L860.5,338.5 L865.5,338.5  M861.5,375.5 L862.5,374.5 L862.5,382.5  M861.5,382.5 L864.5,382.5  M861.5,419.5 L864.5,419.5 L865.5,420.5 L865.5,426.5 L864.5,427.5 L861.5,427.5 L860.5,426.5 L860.5,420.5 L861.5,419.5  M852.5,467.5 L857.5,467.5  M861.5,464.5 L862.5,463.5 L862.5,471.5  M861.5,471.5 L864.5,471.5  M852.5,512.5 L857.5,512.5  M860.5,509.5 L861.5,508.5 L864.5,508.5 L865.5,509.5 L865.5,511.5 L860.5,516.5 L865.5,516.5  M852.5,556.5 L857.5,556.5  M860.5,553.5 L861.5,552.5 L864.5,552.5 L865.5,553.5 L865.5,555.5 L864.5,556.5 L861.5,556.5  M864.5,556.5 L865.5,557.5 L865.5,559.5 L864.5,560.5 L861.5,560.5 L860.5,559.5  M852.5,600.5 L857.5,600.5  M864.5,604.5 L864.5,596.5 L860.5,601.5 L865.5,601.5  M852.5,645.5 L857.5,645.5  M865.5,641.5 L860.5,641.5 L860.5,645.5 L864.5,645.5 L865.5,646.5 L865.5,648.5 L864.5,649.5 L861.5,649.5 L860.5,648.5  M852.5,689.5 L857.5,689.5  M864.5,685.5 L861.5,685.5 L860.5,686.5 L860.5,692.5 L861.5,693.5 L864.5,693.5 L865.5,692.5 L865.5,690.5 L864.5,689.5 L860.5,689.5  M852.5,734.5 L857.5,734.5  M860.5,730.5 L865.5,730.5 L865.5,731.5 L862.5,738.5  M852.5,774.5 L857.5,774.5  M854.5,774.5 L854.5,782.5  M860.5,774.5 L860.5,782.5  M865.5,774.5 L865.5,782.5  M860.5,778.5 L865.5,778.5 "/>
<path d="M716.5,14.5 L716.5,7.5 L720.5,14.5 L720.5,7.5  M727.5,7.5 L723.5,7.5 L723.5,14.5 L727.5,14.5  M723.5,11.5 L726.5,11.5  M730.5,7.5 L734.5,14.5  M734.5,7.5 L730.5,14.5  M737.5,7.5 L737.5,14.5 L741.5,14.5  M744.5,14.5 L744.5,9.5 L746.5,7.5 L748.5,9.5 L748.5,14.5  M744.5,12.5 L748.5,12.5  M751.5,7.5 L754.5,7.5 L755.5,8.5 L755.5,9.5 L754.5,11.5 L751.5,11.5  M754.5,11.5 L755.5,12.5 L755.5,13.5 L754.5,14.5 L751.5,14.5 L751.5,7.5  M758.5,11.5 L762.5,11.5  M769.5,8.5 L768.5,7.5 L766.5,7.5 L765.5,8.5 L765.5,13.5 L766.5,14.5 L768.5,14.5 L769.5,13.5  M773.5,9.5 L775.5,9.5 L776.5,11.5 L776.5,13.5 L775.5,14.5 L773.5,14.5 L772.5,13.5 L772.5,11.5 L773.5,9.5  M780.5,7.5 L781.5,7.5 L781.5,14.5  M780.5,14.5 L782.5,14.5  M787.5,7.5 L788.5,7.5 L788.5,14.5  M787.5,14.5 L789.5,14.5  M793.5,12.5 L797.5,12.5 L797.5,11.5 L796.5,9.5 L794.5,9.5 L793.5,11.5 L793.5,13.5 L794.5,14.5 L797.5,14.5  M804.5,9.5 L804.5,15.5 L803.5,16.5 L801.5,16.5  M804.5,9.5 L801.5,9.5 L800.5,11.5 L800.5,12.5 L801.5,13.5 L804.5,13.5  M807.5,12.5 L811.5,12.5 L811.5,11.5 L810.5,9.5 L808.5,9.5 L807.5,11.5 L807.5,13.5 L808.5,14.5 L811.5,14.5   M822.5,9.5 L824.5,9.5 L825.5,11.5 L825.5,13.5 L824.5,14.5 L822.5,14.5 L821.5,13.5 L821.5,11.5 L822.5,9.5  M832.5,7.5 L831.5,7.5 L830.5,8.5 L830.5,14.5  M829.5,9.5 L832.5,9.5   M842.5,7.5 L845.5,7.5 L846.5,8.5 L846.5,13.5 L845.5,14.5 L842.5,14.5 L842.5,7.5  M849.5,9.5 L849.5,13.5 L850.5,14.5 L852.5,14.5 L853.5,13.5  M853.5,9.5 L853.5,14.5  M856.5,14.5 L856.5,7.5 L859.5,7.5 L860.5,8.5 L860.5,9.5 L859.5,11.5 L856.5,11.5  M864.5,9.5 L866.5,9.5 L867.5,11.5 L867.5,14.5  M867.5,12.5 L864.5,12.5 L863.5,13.5 L864.5,14.5 L867.5,14.5  M874.5,9.5 L874.5,15.5 L873.5,16.5 L871.5,16.5  M874.5,9.5 L871.5,9.5 L870.5,11.5 L870.5,12.5 L871.5,13.5 L874.5,13.5  M877.5,12.5 L881.5,12.5 L881.5,11.5 L880.5,9.5 L878.5,9.5 L877.5,11.5 L877.5,13.5 L878.5,14.5 L881.5,14.5 "/>
<path d="M868.5,55.5 L872.5,55.5 L873.5,56.5 L873.5,62.5 L872.5,63.5 L868.5,63.5 L868.5,55.5  M876.5,55.5 L881.5,55.5 L876.5,63.5 L881.5,63.5  M884.5,55.5 L888.5,55.5 L889.5,56.5 L889.5,62.5 L888.5,63.5 L884.5,63.5 L884.5,55.5 "/>
<path d="M845.5,64.5 L842.5,64.5 L842.5,74.5 L845.5,74.5  M853.5,65.5 L853.5,73.5  M853.5,69.5 L852.5,68.5 L849.5,68.5 L848.5,69.5 L848.5,72.5 L849.5,73.5 L853.5,73.5  M855.5,65.5 L859.5,65.5 L860.5,66.5 L860.5,68.5 L859.5,69.5 L855.5,69.5  M859.5,69.5 L860.5,70.5 L860.5,72.5 L859.5,73.5 L855.5,73.5 L855.5,65.5  M863.5,64.5 L866.5,64.5 L866.5,74.5 L863.5,74.5 "/>
<path d="M888.5,6.5 V14.5 M888.5,6.5 H894.5 M894.5,6.5 L890.5,10.5 L894.5,14.5"/>
</g>
<path d="M891,15 L895,15 L895,11 Z" fill="#ffff00" shape-rendering="crispEdges"/>
<g fill="none" stroke="#ffffff" stroke-width="1" shape-rendering="crispEdges" stroke-linecap="square">
<path d="M172.5,889.5 L176.5,889.5 L178.5,890.5 L178.5,895.5 L176.5,896.5 L172.5,896.5 L172.5,889.5  M183.5,889.5 L185.5,889.5  M184.5,889.5 L184.5,896.5  M183.5,896.5 L185.5,896.5  M196.5,889.5 L190.5,889.5 L190.5,896.5  M190.5,893.5 L194.5,893.5  M205.5,889.5 L199.5,889.5 L199.5,896.5  M199.5,893.5 L203.5,893.5  M214.5,889.5 L208.5,889.5 L208.5,896.5 L214.5,896.5  M208.5,893.5 L212.5,893.5  M217.5,896.5 L217.5,889.5 L221.5,889.5 L223.5,890.5 L223.5,891.5 L221.5,893.5 L217.5,893.5  M220.5,893.5 L223.5,896.5  M232.5,889.5 L226.5,889.5 L226.5,896.5 L232.5,896.5  M226.5,893.5 L230.5,893.5  M235.5,896.5 L235.5,889.5 L241.5,896.5 L241.5,889.5  M244.5,889.5 L250.5,889.5  M247.5,889.5 L247.5,896.5  M255.5,889.5 L257.5,889.5  M256.5,889.5 L256.5,896.5  M255.5,896.5 L257.5,896.5  M262.5,896.5 L262.5,891.5 L265.5,889.5 L268.5,891.5 L268.5,896.5  M262.5,894.5 L268.5,894.5  M271.5,889.5 L271.5,896.5 L277.5,896.5   M289.5,896.5 L289.5,889.5 L293.5,889.5 L295.5,890.5 L295.5,891.5 L293.5,893.5 L289.5,893.5  M292.5,893.5 L295.5,896.5  M304.5,889.5 L298.5,889.5 L298.5,896.5 L304.5,896.5  M298.5,893.5 L302.5,893.5  M313.5,889.5 L307.5,889.5 L307.5,896.5  M307.5,893.5 L311.5,893.5  M316.5,889.5 L316.5,896.5 L322.5,896.5  M331.5,889.5 L325.5,889.5 L325.5,896.5 L331.5,896.5  M325.5,893.5 L329.5,893.5  M340.5,890.5 L338.5,889.5 L336.5,889.5 L334.5,890.5 L334.5,895.5 L336.5,896.5 L338.5,896.5 L340.5,895.5  M343.5,889.5 L349.5,889.5  M346.5,889.5 L346.5,896.5  M354.5,889.5 L356.5,889.5  M355.5,889.5 L355.5,896.5  M354.5,896.5 L356.5,896.5  M361.5,889.5 L364.5,896.5 L367.5,889.5  M372.5,889.5 L374.5,889.5  M373.5,889.5 L373.5,896.5  M372.5,896.5 L374.5,896.5  M379.5,889.5 L385.5,889.5  M382.5,889.5 L382.5,896.5  M388.5,889.5 L391.5,893.5 L394.5,889.5  M391.5,893.5 L391.5,896.5   M410.5,889.5 L409.5,890.5 L408.5,891.5 L408.5,894.5 L409.5,895.5 L410.5,896.5  M415.5,889.5 L421.5,889.5 L415.5,896.5 L421.5,896.5  M424.5,889.5 L428.5,889.5 L430.5,890.5 L430.5,895.5 L428.5,896.5 L424.5,896.5 L424.5,889.5  M433.5,896.5 L433.5,889.5 L437.5,889.5 L439.5,890.5 L439.5,891.5 L437.5,893.5 L433.5,893.5  M436.5,893.5 L439.5,896.5  M444.5,889.5 L445.5,890.5 L446.5,891.5 L446.5,894.5 L445.5,895.5 L444.5,896.5   M462.5,889.5 L464.5,889.5 L466.5,890.5 L466.5,895.5 L464.5,896.5 L462.5,896.5 L460.5,895.5 L460.5,890.5 L462.5,889.5  M472.0,896.5 h1 M484.5,889.5 L478.5,889.5 L478.5,893.5 L482.5,893.5 L484.5,894.5 L484.5,895.5 L482.5,896.5 L480.5,896.5 L478.5,895.5   M496.5,889.5 L500.5,889.5 L502.5,890.5 L502.5,895.5 L500.5,896.5 L496.5,896.5 L496.5,889.5  M511.5,889.5 L505.5,889.5 L505.5,896.5 L511.5,896.5  M505.5,893.5 L509.5,893.5  M520.5,890.5 L518.5,889.5 L516.5,889.5 L514.5,890.5 L514.5,895.5 L516.5,896.5 L518.5,896.5 L520.5,895.5 L520.5,893.5 L517.5,893.5   M532.5,893.5 L538.5,893.5   M550.5,889.5 L550.5,896.5  M556.5,889.5 L550.5,894.5  M552.5,893.5 L556.5,896.5  M559.5,896.5 L559.5,891.5 L562.5,889.5 L565.5,891.5 L565.5,896.5  M559.5,894.5 L565.5,894.5  M574.5,889.5 L568.5,889.5 L568.5,896.5 L574.5,896.5  M568.5,893.5 L572.5,893.5  M583.5,890.5 L581.5,889.5 L579.5,889.5 L577.5,890.5 L577.5,895.5 L579.5,896.5 L581.5,896.5 L583.5,895.5   M597.5,890.5 L598.5,889.5 L598.5,896.5  M597.5,896.5 L599.5,896.5  M610.5,889.5 L604.5,889.5 L604.5,893.5 L608.5,893.5 L610.5,894.5 L610.5,895.5 L608.5,896.5 L606.5,896.5 L604.5,895.5   M622.5,889.5 L626.5,889.5 L628.5,890.5 L628.5,895.5 L626.5,896.5 L622.5,896.5 L622.5,889.5  M637.5,889.5 L631.5,889.5 L631.5,896.5 L637.5,896.5  M631.5,893.5 L635.5,893.5  M646.5,890.5 L644.5,889.5 L642.5,889.5 L640.5,890.5 L640.5,895.5 L642.5,896.5 L644.5,896.5 L646.5,895.5   M658.5,890.5 L660.5,889.5 L662.5,889.5 L664.5,890.5 L664.5,891.5 L658.5,896.5 L664.5,896.5  M673.5,889.5 L667.5,889.5 L667.5,893.5 L671.5,893.5 L673.5,894.5 L673.5,895.5 L671.5,896.5 L669.5,896.5 L667.5,895.5   M687.5,889.5 L689.5,889.5 L691.5,890.5 L691.5,895.5 L689.5,896.5 L687.5,896.5 L685.5,895.5 L685.5,890.5 L687.5,889.5  M696.5,890.5 L697.5,889.5 L697.5,896.5  M696.5,896.5 L698.5,896.5  M706.0,891.5 h1 M706.0,895.5 h1 M718.5,889.5 L712.5,889.5 L712.5,893.5 L716.5,893.5 L718.5,894.5 L718.5,895.5 L716.5,896.5 L714.5,896.5 L712.5,895.5  M721.5,890.5 L723.5,889.5 L725.5,889.5 L727.5,890.5 L727.5,891.5 L725.5,893.5 L723.5,893.5  M725.5,893.5 L727.5,894.5 L727.5,895.5 L725.5,896.5 L723.5,896.5 L721.5,895.5 "/>
</g>
</svg>
</body></html>
